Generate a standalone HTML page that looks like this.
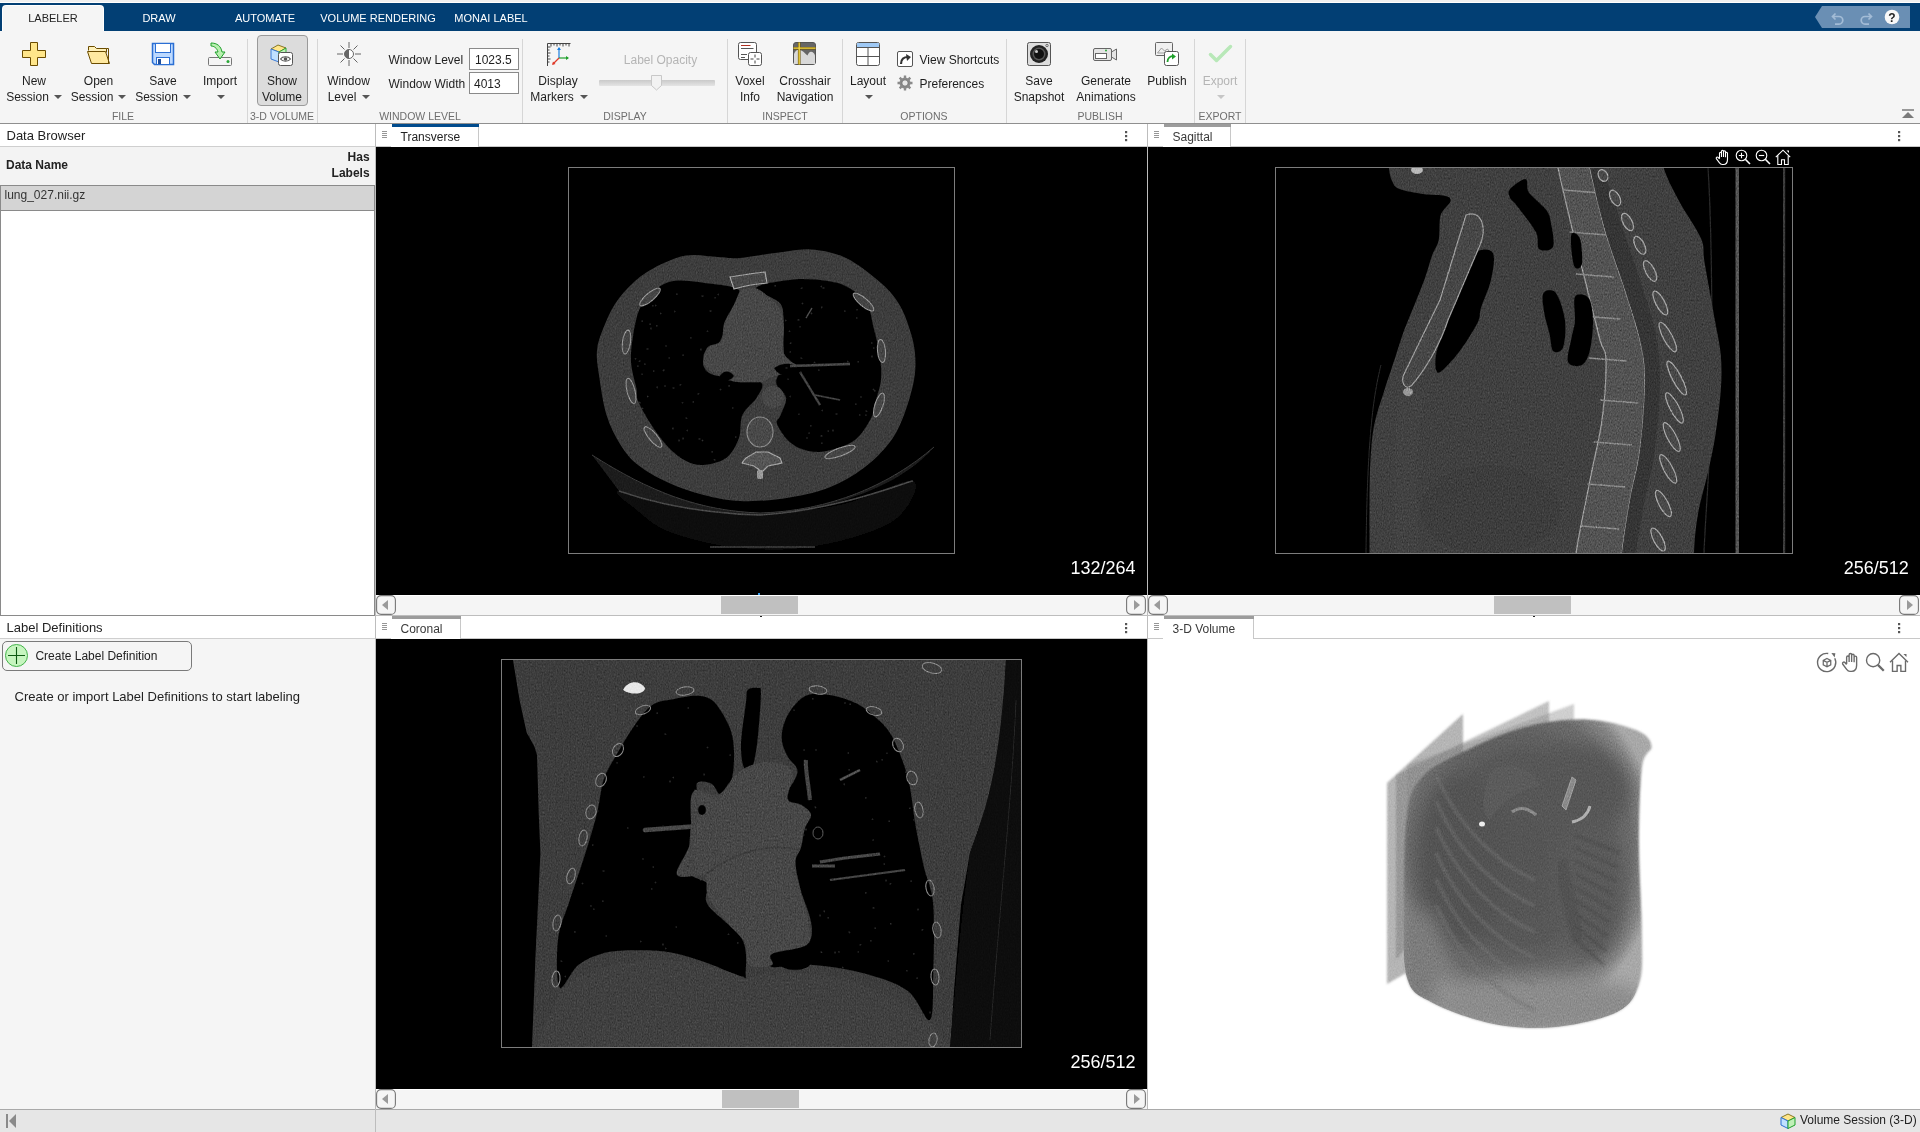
<!DOCTYPE html>
<html><head><meta charset="utf-8"><title>Medical Image Labeler</title>
<style>
*{margin:0;padding:0;box-sizing:border-box}
html,body{width:1920px;height:1132px;overflow:hidden;background:#f5f5f5;font-family:"Liberation Sans",sans-serif;position:relative}
.a{position:absolute}
.t{position:absolute;line-height:1;white-space:nowrap}
svg{position:absolute;overflow:visible}
</style></head><body>
<div class="a" style="left:0px;top:0px;width:1920px;height:2px;background:#f0f0f0;"></div>
<div class="a" style="left:0px;top:2px;width:1920px;height:1px;background:#ffffff;"></div>
<div class="a" style="left:0px;top:3px;width:1920px;height:28px;background:#023f74;"></div>
<div class="a" style="left:3px;top:6px;width:100px;height:25px;background:#f5f5f5;border-radius:3px 3px 0 0;box-shadow:0 0 0 1px #ffffff;"></div>
<div class="t" style="top:13.19px;font-size:11px;color:#222;left:-97px;width:300px;text-align:center;">LABELER</div>
<div class="t" style="top:13.19px;font-size:11px;color:#ffffff;left:9px;width:300px;text-align:center;">DRAW</div>
<div class="t" style="top:13.19px;font-size:11px;color:#ffffff;left:115px;width:300px;text-align:center;">AUTOMATE</div>
<div class="t" style="top:13.19px;font-size:11px;color:#ffffff;left:228px;width:300px;text-align:center;">VOLUME RENDERING</div>
<div class="t" style="top:13.19px;font-size:11px;color:#ffffff;left:341px;width:300px;text-align:center;">MONAI LABEL</div>
<svg style="left:1815px;top:6px;" width="95" height="22" viewBox="0 0 95 22"><path d="M7 0H95V22H7L0 11Z" fill="#6a8fb4"/><path d="M20.5 7.5l-3 3 3 3M17.5 10.5h6.5a3.8 3.8 0 0 1 0 7.6h-4" fill="none" stroke="#a3bcd6" stroke-width="1.7"/><path d="M53.5 7.5l3 3-3 3M56.5 10.5h-6.5a3.8 3.8 0 0 0 0 7.6h4" fill="none" stroke="#a3bcd6" stroke-width="1.7"/><circle cx="77" cy="11" r="7.3" fill="#f8f8f8"/><text x="77" y="15.5" font-family="Liberation Sans" font-weight="bold" font-size="12" text-anchor="middle" fill="#222">?</text></svg>
<div class="a" style="left:0px;top:31px;width:1920px;height:92px;background:#f5f5f5;"></div>
<div class="a" style="left:0px;top:123px;width:1920px;height:1px;background:#8f8f8f;"></div>
<div class="a" style="left:247px;top:39px;width:1px;height:84px;background:#d6d6d6;"></div>
<div class="a" style="left:317px;top:39px;width:1px;height:84px;background:#d6d6d6;"></div>
<div class="a" style="left:522px;top:39px;width:1px;height:84px;background:#d6d6d6;"></div>
<div class="a" style="left:727px;top:39px;width:1px;height:84px;background:#d6d6d6;"></div>
<div class="a" style="left:842px;top:39px;width:1px;height:84px;background:#d6d6d6;"></div>
<div class="a" style="left:1006px;top:39px;width:1px;height:84px;background:#d6d6d6;"></div>
<div class="a" style="left:1194px;top:39px;width:1px;height:84px;background:#d6d6d6;"></div>
<div class="a" style="left:1245px;top:39px;width:1px;height:84px;background:#d6d6d6;"></div>
<div class="t" style="top:111.11px;font-size:10.5px;color:#6e6e6e;left:-27px;width:300px;text-align:center;">FILE</div>
<div class="t" style="top:111.11px;font-size:10.5px;color:#6e6e6e;left:132px;width:300px;text-align:center;">3-D VOLUME</div>
<div class="t" style="top:111.11px;font-size:10.5px;color:#6e6e6e;left:270px;width:300px;text-align:center;">WINDOW LEVEL</div>
<div class="t" style="top:111.11px;font-size:10.5px;color:#6e6e6e;left:475px;width:300px;text-align:center;">DISPLAY</div>
<div class="t" style="top:111.11px;font-size:10.5px;color:#6e6e6e;left:635px;width:300px;text-align:center;">INSPECT</div>
<div class="t" style="top:111.11px;font-size:10.5px;color:#6e6e6e;left:774px;width:300px;text-align:center;">OPTIONS</div>
<div class="t" style="top:111.11px;font-size:10.5px;color:#6e6e6e;left:950px;width:300px;text-align:center;">PUBLISH</div>
<div class="t" style="top:111.11px;font-size:10.5px;color:#6e6e6e;left:1070px;width:300px;text-align:center;">EXPORT</div>
<div class="t" style="top:74.84px;font-size:12px;color:#1e1e1e;left:-116px;width:300px;text-align:center;">New</div>
<div class="t" style="top:90.84px;font-size:12px;color:#1e1e1e;left:-122.5px;width:300px;text-align:center;">Session</div>
<svg style="left:54px;top:95px;" width="8" height="4" viewBox="0 0 8 4"><path d="M0 0H8L4 4Z" fill="#555"/></svg>
<div class="t" style="top:74.84px;font-size:12px;color:#1e1e1e;left:-51.5px;width:300px;text-align:center;">Open</div>
<div class="t" style="top:90.84px;font-size:12px;color:#1e1e1e;left:-58px;width:300px;text-align:center;">Session</div>
<svg style="left:118px;top:95px;" width="8" height="4" viewBox="0 0 8 4"><path d="M0 0H8L4 4Z" fill="#555"/></svg>
<div class="t" style="top:74.84px;font-size:12px;color:#1e1e1e;left:13px;width:300px;text-align:center;">Save</div>
<div class="t" style="top:90.84px;font-size:12px;color:#1e1e1e;left:6.5px;width:300px;text-align:center;">Session</div>
<svg style="left:183px;top:95px;" width="8" height="4" viewBox="0 0 8 4"><path d="M0 0H8L4 4Z" fill="#555"/></svg>
<div class="t" style="top:74.84px;font-size:12px;color:#1e1e1e;left:70px;width:300px;text-align:center;">Import</div>
<svg style="left:217px;top:95px;" width="8" height="4" viewBox="0 0 8 4"><path d="M0 0H8L4 4Z" fill="#555"/></svg>
<svg style="left:22px;top:42px;" width="24" height="24" viewBox="0 0 24 24"><path d="M8.5 0.5h7v8h8v7h-8v8h-7v-8h-8v-7h8z" fill="#ffe68a" stroke="#6b4c00" stroke-width="1" stroke-linejoin="round"/></svg>
<svg style="left:87px;top:45px;" width="24" height="19" viewBox="0 0 24 19"><path d="M1.5 5.5V1.5h6l2 2h10v4" fill="#fff1b8" stroke="#6b4c00"/><path d="M0.5 6.5h18l4 12h-18z" fill="#ffe9a0" stroke="#6b4c00" stroke-linejoin="round"/><path d="M19.5 3.5h2v15" fill="none" stroke="#6b4c00"/></svg>
<svg style="left:151px;top:42px;" width="24" height="24" viewBox="0 0 24 24"><path d="M1.5 1.5h21v21h-19l-2-2z" fill="#bcd9ff" stroke="#2b6fd4" stroke-width="1.5"/><rect x="4.5" y="1.5" width="15" height="9" fill="#fff" stroke="#2b6fd4"/><rect x="5.5" y="15.5" width="13" height="7" fill="#fff" stroke="#2b6fd4"/><rect x="7" y="17" width="3" height="5" fill="#1f4f9c"/></svg>
<svg style="left:208px;top:42px;" width="24" height="24" viewBox="0 0 24 24"><rect x="0.5" y="15.5" width="23" height="8" rx="1" fill="#f5f5f5" stroke="#777"/><path d="M3 1c6 0 10 3 11 9h3l-5 7-5-7h3c-1-4-4-6-7-6z" fill="#b8f0b0" stroke="#1fa02a" stroke-linejoin="round"/><circle cx="20" cy="19.5" r="1.5" fill="#2aa838"/></svg>
<div class="a" style="left:257px;top:35px;width:51px;height:71px;background:#dcdcdc;border:1px solid #9a9a9a;border-radius:4px;"></div>
<div class="t" style="top:74.84px;font-size:12px;color:#1e1e1e;left:132px;width:300px;text-align:center;">Show</div>
<div class="t" style="top:90.84px;font-size:12px;color:#1e1e1e;left:132px;width:300px;text-align:center;">Volume</div>
<svg style="left:269px;top:42px;" width="26" height="24" viewBox="0 0 26 24"><path d="M2 7l7-4 8 3v0l-7 4z" fill="#ffe68a" stroke="#6b5a00" stroke-width="0.8"/><path d="M2 7l8 3v10l-8-3z" fill="#bfe0ff" stroke="#2b6fd4" stroke-width="0.9"/><path d="M10 10l7-4v9l-7 5z" fill="#c0f0b8" stroke="#1fa02a" stroke-width="0.9"/><rect x="9.5" y="10.5" width="14" height="13" rx="2" fill="#fff" stroke="#555"/><path d="M11.5 17c2-3 8-3 10 0c-2 3-8 3-10 0z" fill="none" stroke="#555" stroke-width="1.1"/><circle cx="16.5" cy="17" r="1.8" fill="#555"/></svg>
<div class="t" style="top:74.84px;font-size:12px;color:#1e1e1e;left:198.5px;width:300px;text-align:center;">Window</div>
<div class="t" style="top:90.84px;font-size:12px;color:#1e1e1e;left:192px;width:300px;text-align:center;">Level</div>
<svg style="left:362px;top:95px;" width="8" height="4" viewBox="0 0 8 4"><path d="M0 0H8L4 4Z" fill="#555"/></svg>
<svg style="left:337px;top:42px;" width="24" height="24" viewBox="0 0 24 24"><g stroke="#666" stroke-width="1"><path d="M12 0v6M12 18v6M0 12h6M18 12h6M3.5 3.5l4 4M16.5 16.5l4 4M3.5 20.5l4-4M16.5 7.5l4-4"/></g><circle cx="12" cy="12" r="4.5" fill="#fff" stroke="#666"/><path d="M12 7.5a4.5 4.5 0 0 0 0 9z" fill="#666"/></svg>
<div class="t" style="top:53.84px;font-size:12px;color:#1e1e1e;left:388.5px;">Window Level</div>
<div class="t" style="top:77.84px;font-size:12px;color:#1e1e1e;left:388.5px;">Window Width</div>
<div class="a" style="left:469px;top:48px;width:50px;height:22px;background:#fff;border:1px solid #8a8a8a;"></div>
<div class="a" style="left:469px;top:72px;width:50px;height:22px;background:#fff;border:1px solid #8a8a8a;"></div>
<div class="t" style="top:53.84px;font-size:12px;color:#1e1e1e;left:475px;">1023.5</div>
<div class="t" style="top:77.84px;font-size:12px;color:#1e1e1e;left:474px;">4013</div>
<div class="t" style="top:74.84px;font-size:12px;color:#1e1e1e;left:408px;width:300px;text-align:center;">Display</div>
<div class="t" style="top:90.84px;font-size:12px;color:#1e1e1e;left:402px;width:300px;text-align:center;">Markers</div>
<svg style="left:580px;top:95px;" width="8" height="4" viewBox="0 0 8 4"><path d="M0 0H8L4 4Z" fill="#555"/></svg>
<svg style="left:546px;top:42px;" width="25" height="24" viewBox="0 0 25 24"><g stroke="#444" stroke-width="1" fill="none"><path d="M1.5 24V1.5H24.5"/><path d="M5 1.5v3M8 1.5v2M11 1.5v3M14 1.5v2M17 1.5v3M20 1.5v2M23 1.5v3M1.5 5h3M1.5 8h2M1.5 11h3M1.5 14h2M1.5 17h3M1.5 20h2"/></g><path d="M13 16V6" stroke="#1a7fe0" stroke-width="1.2"/><path d="M13 5l-2 3h4z" fill="#1a7fe0"/><path d="M13 16h9" stroke="#1fa02a" stroke-width="1.2"/><path d="M23 16l-3-2v4z" fill="#1fa02a"/><path d="M13 16l-6 6" stroke="#e03a2a" stroke-width="1.2"/><path d="M6 23l1-3.5 2.5 2.5z" fill="#e03a2a"/></svg>
<div class="t" style="top:53.84px;font-size:12px;color:#b5b5b5;left:510.5px;width:300px;text-align:center;">Label Opacity</div>
<div class="a" style="left:599px;top:80px;width:116px;height:6px;background:linear-gradient(#c9c9c9,#e4e4e4);border-radius:1px;"></div>
<svg style="left:650px;top:74px;" width="13" height="17" viewBox="0 0 13 17"><path d="M1.5 1.5h10v10l-5 4.5-5-4.5z" fill="#f2f2f2" stroke="#c8c8c8"/></svg>
<div class="t" style="top:74.84px;font-size:12px;color:#1e1e1e;left:600px;width:300px;text-align:center;">Voxel</div>
<div class="t" style="top:90.84px;font-size:12px;color:#1e1e1e;left:600px;width:300px;text-align:center;">Info</div>
<div class="t" style="top:74.84px;font-size:12px;color:#1e1e1e;left:655px;width:300px;text-align:center;">Crosshair</div>
<div class="t" style="top:90.84px;font-size:12px;color:#1e1e1e;left:655px;width:300px;text-align:center;">Navigation</div>
<svg style="left:738px;top:42px;" width="25" height="24" viewBox="0 0 25 24"><rect x="0.5" y="0.5" width="18" height="17" rx="2" fill="#fff" stroke="#555"/><path d="M3 3.5h9.5" stroke="#b03020" stroke-width="1"/><path d="M3 6.5h12.5M3 12.5h6M3 15.5h4" stroke="#555" stroke-width="1"/><rect x="10.5" y="10.5" width="13" height="13" rx="2" fill="#fff" stroke="#555"/><path d="M17 12.5v3M17 18.5v3M12.5 17h3M18.5 17h3" stroke="#444"/></svg>
<svg style="left:793px;top:42px;" width="23" height="23" viewBox="0 0 23 23"><rect x="0.5" y="0.5" width="22" height="22" rx="2.5" fill="#666" stroke="#555"/><path d="M1 22V12C2 9 4 7.5 6.2 7.7C9 8 12 11 14.4 13.5C15.5 11 16.5 9.7 18 9.7C20 9.7 21.5 11.5 22 13.5V22Z" fill="#d9d9d9"/><path d="M6.2 0.5V22.5M0.5 6.2H22.5" stroke="#6b5200" stroke-width="2.6"/><path d="M6.2 0.5V22.5M0.5 6.2H22.5" stroke="#f5d94a" stroke-width="1.3"/></svg>
<div class="t" style="top:74.84px;font-size:12px;color:#1e1e1e;left:718px;width:300px;text-align:center;">Layout</div>
<svg style="left:865px;top:95px;" width="8" height="4" viewBox="0 0 8 4"><path d="M0 0H8L4 4Z" fill="#555"/></svg>
<svg style="left:856px;top:42px;" width="25" height="25" viewBox="0 0 25 25"><rect x="0.5" y="0.5" width="23" height="23" rx="2" fill="#fff" stroke="#555"/><path d="M1 1h22v4H1z" fill="#9fc9f5"/><path d="M0.5 5.5h23M12 5.5v18M0.5 14.5h23" stroke="#555"/></svg>
<svg style="left:897px;top:51px;" width="17" height="17" viewBox="0 0 17 17"><rect x="0.5" y="0.5" width="15" height="15" rx="1.5" fill="#fff" stroke="#555"/><path d="M4 13c0-5 3-7 7-7" fill="none" stroke="#333" stroke-width="2.2"/><path d="M9 3l5 3-4 4z" fill="#333"/></svg>
<div class="t" style="top:53.84px;font-size:12px;color:#1e1e1e;left:919.5px;">View Shortcuts</div>
<svg style="left:897px;top:75px;" width="16" height="16" viewBox="0 0 16 16"><g fill="#8a8a8a"><circle cx="8" cy="8" r="5.5"/><g stroke="#8a8a8a" stroke-width="2.4"><path d="M8 0.5v3M8 12.5v3M0.5 8h3M12.5 8h3M2.7 2.7l2.1 2.1M11.2 11.2l2.1 2.1M2.7 13.3l2.1-2.1M11.2 4.8l2.1-2.1"/></g></g><circle cx="8" cy="8" r="3.2" fill="#e8e8e8" stroke="#666" stroke-width="0.8"/></svg>
<div class="t" style="top:77.84px;font-size:12px;color:#1e1e1e;left:919.5px;">Preferences</div>
<div class="t" style="top:74.84px;font-size:12px;color:#1e1e1e;left:889px;width:300px;text-align:center;">Save</div>
<div class="t" style="top:90.84px;font-size:12px;color:#1e1e1e;left:889px;width:300px;text-align:center;">Snapshot</div>
<div class="t" style="top:74.84px;font-size:12px;color:#1e1e1e;left:956px;width:300px;text-align:center;">Generate</div>
<div class="t" style="top:90.84px;font-size:12px;color:#1e1e1e;left:956px;width:300px;text-align:center;">Animations</div>
<div class="t" style="top:74.84px;font-size:12px;color:#1e1e1e;left:1017px;width:300px;text-align:center;">Publish</div>
<svg style="left:1027px;top:42px;" width="24" height="24" viewBox="0 0 24 24"><rect x="0.5" y="0.5" width="23" height="23" rx="2" fill="#ddd" stroke="#555"/><circle cx="12" cy="12" r="9" fill="#222"/><circle cx="12" cy="12" r="6.5" fill="#555"/><circle cx="12" cy="12" r="5" fill="#111"/><circle cx="9.5" cy="9.5" r="1.5" fill="#ccc"/><circle cx="20" cy="3.5" r="1.2" fill="none" stroke="#555" stroke-width="0.8"/></svg>
<svg style="left:1093px;top:46px;" width="25" height="16" viewBox="0 0 25 16"><rect x="0.5" y="2.5" width="18" height="12" rx="1.5" fill="#e5e5e5" stroke="#666"/><rect x="2.5" y="7.5" width="11" height="5" fill="#fff" stroke="#666"/><circle cx="13" cy="4.5" r="1" fill="#2aa838"/><path d="M18.5 6l5-3v11l-5-3z" fill="#e5e5e5" stroke="#666"/></svg>
<svg style="left:1155px;top:42px;" width="25" height="25" viewBox="0 0 25 25"><rect x="0.5" y="0.5" width="17" height="13" rx="1" fill="#f0f0f0" stroke="#666"/><path d="M2.5 11l4-5 3 3 3-2 3 4z" fill="none" stroke="#888" stroke-width="0.8"/><rect x="9.5" y="9.5" width="14" height="14" rx="2" fill="#fff" stroke="#555"/><path d="M12.5 20c0-4 3-6 6-6" fill="none" stroke="#1fa02a" stroke-width="1.8"/><path d="M17 11.5l4 3-4 3z" fill="#1fa02a"/></svg>
<div class="t" style="top:74.84px;font-size:12px;color:#b5b5b5;left:1070px;width:300px;text-align:center;">Export</div>
<svg style="left:1217px;top:95px;" width="8" height="4" viewBox="0 0 8 4"><path d="M0 0H8L4 4Z" fill="#c6c6c6"/></svg>
<svg style="left:1209px;top:45px;" width="23" height="18" viewBox="0 0 23 18"><path d="M1.5 9.5l6 6 14-14" fill="none" stroke="#b8e8b8" stroke-width="3.5" stroke-linecap="round" stroke-linejoin="round"/></svg>
<svg style="left:1901px;top:109px;" width="14" height="10" viewBox="0 0 14 10"><path d="M1 1h12" stroke="#7a7a7a" stroke-width="1.5"/><path d="M7 3l6 6H1z" fill="#7a7a7a"/></svg>
<div class="a" style="left:0px;top:124px;width:375px;height:985px;background:#f5f5f5;"></div>
<div class="a" style="left:0px;top:124px;width:375px;height:22px;background:#ffffff;"></div>
<div class="a" style="left:0px;top:146px;width:375px;height:1px;background:#cfcfcf;"></div>
<div class="t" style="top:128.60px;font-size:13px;color:#222;left:6.5px;">Data Browser</div>
<div class="a" style="left:0px;top:147px;width:375px;height:38px;background:#f3f3f3;"></div>
<div class="a" style="left:0px;top:185px;width:375px;height:431px;background:#ffffff;border:1px solid #8a8a8a;border-top:none;"></div>
<div class="t" style="top:159.44px;font-size:12px;color:#222;font-weight:bold;left:6px;">Data Name</div>
<div class="t" style="top:151.44px;font-size:12px;color:#222;font-weight:bold;left:-30.399999999999977px;width:400px;text-align:right;">Has</div>
<div class="t" style="top:166.54px;font-size:12px;color:#222;font-weight:bold;left:-30.399999999999977px;width:400px;text-align:right;">Labels</div>
<div class="a" style="left:1px;top:185px;width:373px;height:26px;background:#d4d4d4;border-top:1px solid #8a8a8a;border-bottom:1px solid #8a8a8a;"></div>
<div class="t" style="top:189.34px;font-size:12px;color:#333;left:4.5px;">lung_027.nii.gz</div>
<div class="a" style="left:0px;top:616px;width:375px;height:22px;background:#ffffff;"></div>
<div class="a" style="left:0px;top:638px;width:375px;height:1px;background:#cfcfcf;"></div>
<div class="t" style="top:620.80px;font-size:13px;color:#222;left:6.5px;">Label Definitions</div>
<div class="a" style="left:2px;top:641px;width:190px;height:30px;background:#f5f5f5;border:1px solid #7a7a7a;border-radius:5px;"></div>
<svg style="left:5px;top:644px;" width="23" height="23" viewBox="0 0 23 23"><circle cx="11.5" cy="11.5" r="11" fill="#c6f5bf" stroke="#43b34a" stroke-width="1"/><path d="M11.5 3v17M3 11.5h17" stroke="#0d5a12" stroke-width="1.1"/></svg>
<div class="t" style="top:649.74px;font-size:12px;color:#222;left:35.4px;">Create Label Definition</div>
<div class="t" style="top:689.50px;font-size:13px;color:#222;left:14.6px;">Create or import Label Definitions to start labeling</div>
<div class="a" style="left:375px;top:124px;width:1px;height:1008px;background:#bdbdbd;"></div>
<div class="a" style="left:1147px;top:124px;width:1px;height:985px;background:#bdbdbd;"></div>
<div class="a" style="left:376px;top:124px;width:771px;height:23px;background:#ffffff;"></div>
<div class="a" style="left:376px;top:146px;width:771px;height:1px;background:#c8c8c8;"></div>
<div class="a" style="left:391px;top:124px;width:1px;height:23px;background:#c8c8c8;"></div>
<svg style="left:382px;top:131px;" width="5" height="8" viewBox="0 0 5 8"><path d="M0 0.5h5M0 2.5h5M0 4.5h5M0 6.5h5" stroke="#8a8a8a" stroke-width="0.9"/></svg>
<div class="a" style="left:391px;top:124px;width:88px;height:23px;background:#ffffff;border-right:1px solid #c8c8c8;"></div>
<div class="a" style="left:392px;top:124px;width:87px;height:3px;background:#004b8d;"></div>
<div class="t" style="top:130.64px;font-size:12px;color:#222;left:400.5px;">Transverse</div>
<svg style="left:1124.5px;top:130.5px;" width="3" height="11" viewBox="0 0 3 11"><rect x="0" y="0" width="2.2" height="2.2" fill="#555"/><rect x="0" y="4" width="2.2" height="2.2" fill="#555"/><rect x="0" y="8" width="2.2" height="2.2" fill="#555"/></svg>
<div class="a" style="left:376px;top:147px;width:771px;height:448px;background:#000000;"></div>
<div class="a" style="left:376px;top:595px;width:771px;height:20px;background:#f5f5f5;border-top:1px solid #ffffff;"></div>
<div class="a" style="left:376px;top:615px;width:771px;height:1px;background:#bdbdbd;"></div>
<svg style="left:376px;top:595px;" width="20" height="20" viewBox="0 0 20 20"><rect x="0.6" y="0.6" width="18.8" height="18.8" rx="4.5" fill="#f5f5f5" stroke="#777" stroke-width="1.1"/><path d="M12 5v10l-6-5z" fill="#9a9a9a"/></svg>
<svg style="left:1126px;top:595px;" width="20" height="20" viewBox="0 0 20 20"><rect x="0.6" y="0.6" width="18.8" height="18.8" rx="4.5" fill="#f5f5f5" stroke="#777" stroke-width="1.1"/><path d="M8 5v10l6-5z" fill="#9a9a9a"/></svg>
<div class="a" style="left:721px;top:596px;width:77px;height:18px;background:#c0c0c0;"></div>
<div class="a" style="left:1148px;top:124px;width:772px;height:23px;background:#ffffff;"></div>
<div class="a" style="left:1148px;top:146px;width:772px;height:1px;background:#c8c8c8;"></div>
<div class="a" style="left:1163px;top:124px;width:1px;height:23px;background:#c8c8c8;"></div>
<svg style="left:1154px;top:131px;" width="5" height="8" viewBox="0 0 5 8"><path d="M0 0.5h5M0 2.5h5M0 4.5h5M0 6.5h5" stroke="#8a8a8a" stroke-width="0.9"/></svg>
<div class="a" style="left:1163px;top:124px;width:68px;height:23px;background:#ffffff;border-right:1px solid #c8c8c8;"></div>
<div class="a" style="left:1164px;top:124px;width:67px;height:3px;background:#9c9c9c;"></div>
<div class="t" style="top:130.64px;font-size:12px;color:#3a3a3a;left:1172.5px;">Sagittal</div>
<svg style="left:1897.5px;top:130.5px;" width="3" height="11" viewBox="0 0 3 11"><rect x="0" y="0" width="2.2" height="2.2" fill="#555"/><rect x="0" y="4" width="2.2" height="2.2" fill="#555"/><rect x="0" y="8" width="2.2" height="2.2" fill="#555"/></svg>
<div class="a" style="left:1148px;top:147px;width:772px;height:448px;background:#000000;"></div>
<div class="a" style="left:1148px;top:595px;width:772px;height:20px;background:#f5f5f5;border-top:1px solid #ffffff;"></div>
<div class="a" style="left:1148px;top:615px;width:772px;height:1px;background:#bdbdbd;"></div>
<svg style="left:1148px;top:595px;" width="20" height="20" viewBox="0 0 20 20"><rect x="0.6" y="0.6" width="18.8" height="18.8" rx="4.5" fill="#f5f5f5" stroke="#777" stroke-width="1.1"/><path d="M12 5v10l-6-5z" fill="#9a9a9a"/></svg>
<svg style="left:1899px;top:595px;" width="20" height="20" viewBox="0 0 20 20"><rect x="0.6" y="0.6" width="18.8" height="18.8" rx="4.5" fill="#f5f5f5" stroke="#777" stroke-width="1.1"/><path d="M8 5v10l6-5z" fill="#9a9a9a"/></svg>
<div class="a" style="left:1494px;top:596px;width:77px;height:18px;background:#c0c0c0;"></div>
<div class="a" style="left:376px;top:616px;width:771px;height:23px;background:#ffffff;"></div>
<div class="a" style="left:376px;top:638px;width:771px;height:1px;background:#c8c8c8;"></div>
<div class="a" style="left:391px;top:616px;width:1px;height:23px;background:#c8c8c8;"></div>
<svg style="left:382px;top:623px;" width="5" height="8" viewBox="0 0 5 8"><path d="M0 0.5h5M0 2.5h5M0 4.5h5M0 6.5h5" stroke="#8a8a8a" stroke-width="0.9"/></svg>
<div class="a" style="left:391px;top:616px;width:70px;height:23px;background:#ffffff;border-right:1px solid #c8c8c8;"></div>
<div class="a" style="left:392px;top:616px;width:69px;height:3px;background:#9c9c9c;"></div>
<div class="t" style="top:622.64px;font-size:12px;color:#3a3a3a;left:400.5px;">Coronal</div>
<svg style="left:1124.5px;top:622.5px;" width="3" height="11" viewBox="0 0 3 11"><rect x="0" y="0" width="2.2" height="2.2" fill="#555"/><rect x="0" y="4" width="2.2" height="2.2" fill="#555"/><rect x="0" y="8" width="2.2" height="2.2" fill="#555"/></svg>
<div class="a" style="left:376px;top:639px;width:771px;height:450px;background:#000000;"></div>
<div class="a" style="left:376px;top:1089px;width:771px;height:20px;background:#f5f5f5;border-top:1px solid #ffffff;"></div>
<div class="a" style="left:376px;top:1109px;width:771px;height:1px;background:#bdbdbd;"></div>
<svg style="left:376px;top:1089px;" width="20" height="20" viewBox="0 0 20 20"><rect x="0.6" y="0.6" width="18.8" height="18.8" rx="4.5" fill="#f5f5f5" stroke="#777" stroke-width="1.1"/><path d="M12 5v10l-6-5z" fill="#9a9a9a"/></svg>
<svg style="left:1126px;top:1089px;" width="20" height="20" viewBox="0 0 20 20"><rect x="0.6" y="0.6" width="18.8" height="18.8" rx="4.5" fill="#f5f5f5" stroke="#777" stroke-width="1.1"/><path d="M8 5v10l6-5z" fill="#9a9a9a"/></svg>
<div class="a" style="left:722px;top:1090px;width:77px;height:18px;background:#c0c0c0;"></div>
<div class="a" style="left:1148px;top:616px;width:772px;height:23px;background:#ffffff;"></div>
<div class="a" style="left:1148px;top:638px;width:772px;height:1px;background:#c8c8c8;"></div>
<div class="a" style="left:1163px;top:616px;width:1px;height:23px;background:#c8c8c8;"></div>
<svg style="left:1154px;top:623px;" width="5" height="8" viewBox="0 0 5 8"><path d="M0 0.5h5M0 2.5h5M0 4.5h5M0 6.5h5" stroke="#8a8a8a" stroke-width="0.9"/></svg>
<div class="a" style="left:1163px;top:616px;width:91px;height:23px;background:#ffffff;border-right:1px solid #c8c8c8;"></div>
<div class="a" style="left:1164px;top:616px;width:90px;height:3px;background:#9c9c9c;"></div>
<div class="t" style="top:622.64px;font-size:12px;color:#3a3a3a;left:1172.5px;">3-D Volume</div>
<svg style="left:1897.5px;top:622.5px;" width="3" height="11" viewBox="0 0 3 11"><rect x="0" y="0" width="2.2" height="2.2" fill="#555"/><rect x="0" y="4" width="2.2" height="2.2" fill="#555"/><rect x="0" y="8" width="2.2" height="2.2" fill="#555"/></svg>
<div class="a" style="left:1148px;top:639px;width:772px;height:470px;background:#ffffff;"></div>
<svg style="left:376px;top:147px" width="771" height="448" viewBox="376 147 771 448"><defs><filter id="tb" x="-5%" y="-5%" width="110%" height="110%"><feGaussianBlur stdDeviation="0.7"/></filter><filter id="tn" x="0" y="0" width="100%" height="100%"><feTurbulence type="fractalNoise" baseFrequency="0.9" numOctaves="1" seed="3"/><feColorMatrix values="0 0 0 0 0.5 0 0 0 0 0.5 0 0 0 0 0.5 0 0 0 0.18 0"/><feComposite in2="SourceGraphic" operator="in"/></filter></defs>
<g filter="url(#tb)">
<path d="M619.0 491.0 C626.8 491.0 656.5 503.3 680.0 507.0 C703.5 510.7 733.3 513.3 760.0 513.0 C786.7 512.7 814.5 510.3 840.0 505.0 C865.5 499.7 904.2 478.3 913.0 481.0 C921.8 483.7 909.2 510.2 893.0 521.0 C876.8 531.8 841.5 541.5 816.0 546.0 C790.5 550.5 764.3 550.3 740.0 548.0 C715.7 545.7 687.8 538.8 670.0 532.0 C652.2 525.2 641.5 513.8 633.0 507.0 C624.5 500.2 611.2 491.0 619.0 491.0Z" fill="#0e0e0e"/>
<path d="M592 455 C650 492 700 511 760 513 C830 511 890 485 934 447 C905 482 840 510 760 515 C690 513 645 500 619 491Z" fill="#1c1c1c"/>
<path d="M592 455 C650 492 700 511 760 513 C830 511 890 485 934 447" fill="none" stroke="#3a3a3a" stroke-width="1"/>
<path d="M619 491 C645 500 690 513 760 515 C840 510 905 482 913 481" fill="none" stroke="#4a4a4a" stroke-width="1.6"/>
<path d="M710 547 L815 547" stroke="#333" stroke-width="1.8"/>
<path d="M740.0 258.0 C749.5 257.3 763.2 254.4 775.0 253.0 C786.8 251.6 798.9 248.6 810.7 249.4 C822.5 250.2 834.3 252.4 846.0 258.0 C857.7 263.6 872.2 275.3 881.0 283.0 C889.8 290.7 894.2 296.3 899.0 304.0 C903.8 311.7 906.9 320.7 909.6 329.0 C912.3 337.3 914.3 345.2 915.0 353.7 C915.7 362.2 915.8 369.8 914.0 380.0 C912.2 390.2 908.0 404.7 904.0 415.0 C900.0 425.3 896.7 433.2 890.0 442.0 C883.3 450.8 874.0 460.3 863.7 468.0 C853.4 475.7 841.3 482.9 828.0 488.0 C814.7 493.1 798.7 496.2 784.0 498.4 C769.3 500.6 753.4 501.6 740.0 501.0 C726.6 500.4 715.7 498.1 703.7 495.0 C691.7 491.9 679.0 487.5 668.0 482.5 C657.0 477.5 645.9 471.2 638.0 465.0 C630.1 458.8 625.9 453.3 620.6 445.0 C615.4 436.7 610.1 426.7 606.5 415.0 C602.9 403.3 600.6 385.8 599.0 375.0 C597.4 364.2 596.3 357.7 597.0 350.0 C597.7 342.3 600.0 336.7 603.0 329.0 C606.0 321.3 610.0 311.7 615.0 304.0 C620.0 296.3 626.5 289.0 633.0 283.0 C639.5 277.0 645.2 272.6 654.0 268.0 C662.8 263.4 675.3 257.4 686.0 255.6 C696.7 253.8 709.0 256.6 718.0 257.0 C727.0 257.4 730.5 258.7 740.0 258.0Z" fill="#3e3e3e"/>
<path d="M673.6 281.0 C681.9 279.8 694.1 281.5 705.0 283.0 C715.9 284.5 734.5 285.6 739.0 290.0 C743.5 294.4 735.0 301.2 732.0 309.5 C729.0 317.8 724.0 333.2 721.0 339.5 C718.0 345.8 716.7 345.4 714.0 347.5 C711.3 349.6 706.7 348.9 705.0 352.0 C703.3 355.1 702.2 362.2 703.7 366.0 C705.2 369.8 707.1 372.8 714.0 375.0 C720.9 377.2 737.0 377.6 745.0 379.0 C753.0 380.4 760.0 380.4 762.0 383.5 C764.0 386.6 760.0 392.4 756.7 397.7 C753.5 402.9 745.5 408.3 742.5 415.0 C739.5 421.7 741.6 430.9 739.0 438.0 C736.4 445.1 732.5 453.2 726.6 457.7 C720.7 462.2 710.5 464.4 703.7 465.0 C696.9 465.6 692.0 464.0 686.0 461.0 C680.0 458.0 673.9 453.2 668.0 447.0 C662.1 440.8 655.7 431.7 650.7 424.0 C645.7 416.3 640.4 406.8 638.0 401.0 C635.6 395.2 637.7 395.4 636.5 389.0 C635.3 382.6 631.6 371.3 631.0 362.5 C630.4 353.7 631.5 345.1 633.0 336.0 C634.5 326.9 636.3 315.7 640.0 308.0 C643.7 300.3 649.4 294.5 655.0 290.0 C660.6 285.5 665.3 282.2 673.6 281.0Z" fill="#060606"/>
<path d="M756.0 288.0 C758.1 283.9 781.0 280.7 793.0 279.5 C805.0 278.3 818.6 279.6 828.0 281.0 C837.4 282.4 843.0 284.2 849.5 288.0 C856.0 291.8 862.9 297.2 867.0 304.0 C871.1 310.8 871.9 320.7 874.0 329.0 C876.1 337.3 878.4 345.2 879.6 353.7 C880.8 362.2 881.9 371.2 881.0 380.0 C880.1 388.8 875.7 400.2 874.0 406.7 C872.3 413.2 873.9 413.4 870.7 419.0 C867.5 424.6 862.1 434.7 855.0 440.0 C847.9 445.3 836.0 448.9 828.0 450.7 C820.0 452.5 813.4 452.1 807.0 450.7 C800.6 449.2 794.5 446.4 789.5 442.0 C784.5 437.6 778.5 428.5 777.0 424.0 C775.5 419.5 779.1 419.4 780.6 415.0 C782.1 410.6 786.8 403.2 786.0 397.7 C785.2 392.2 776.0 387.9 776.0 382.0 C776.0 376.1 784.7 366.7 786.0 362.0 C787.3 357.3 784.5 359.2 784.0 353.7 C783.5 348.2 783.6 337.3 783.0 329.0 C782.4 320.7 785.1 310.8 780.6 304.0 C776.1 297.2 753.9 292.1 756.0 288.0Z" fill="#060606"/>
<path d="M741.7 289.5 C744.6 288.7 751.4 286.5 756.6 288.4 C761.8 290.3 768.5 296.8 772.7 301.0 C776.9 305.2 780.1 309.2 782.0 313.6 C783.9 318.0 783.8 321.3 784.0 327.4 C784.2 333.5 782.0 344.8 783.0 350.4 C784.0 355.9 787.7 358.1 790.0 360.7 C792.3 363.3 797.3 364.1 797.0 366.0 C796.7 367.9 792.5 370.0 788.0 372.0 C783.5 374.0 774.5 376.3 770.0 378.0 C765.5 379.7 767.1 381.4 761.0 382.0 C754.9 382.6 740.6 382.5 733.6 381.4 C726.6 380.3 723.5 378.3 718.7 375.6 C713.9 372.9 707.0 369.9 705.0 365.3 C703.0 360.7 704.3 352.1 707.0 348.0 C709.7 343.9 718.1 345.2 721.0 341.0 C723.9 336.8 722.3 328.7 724.4 322.8 C726.5 316.9 731.2 310.6 733.6 305.6 C736.0 300.6 737.6 295.7 739.0 293.0 C740.4 290.3 738.8 290.3 741.7 289.5Z" fill="#474747"/>
<circle cx="773" cy="397" r="11" fill="#474747"/>
<path d="M719 377 C723 370 730 370 734 376 C730 382 723 382 719 377Z" fill="#060606"/>
<path d="M774 368 C782 362 795 362 800 370 C790 378 780 378 774 368Z" fill="#060606"/>
<path d="M790 366 L850 364" stroke="#484848" stroke-width="2.5"/>
<path d="M800 372 L820 405" stroke="#464646" stroke-width="2.2"/>
<path d="M815 395 L840 400" stroke="#444" stroke-width="1.3"/>
<path d="M806 318 L812 308" stroke="#555" stroke-width="1.3"/>
<ellipse cx="760" cy="432" rx="13" ry="15" fill="#4a4a4a" stroke="#8e8e8e" stroke-width="1.1"/>
<path d="M746 458 L756 452 L768 452 L780 458 L782 463 L768 466 L762 472 L754 466 L742 463Z" fill="#555" stroke="#a8a8a8" stroke-width="1.1"/>
<rect x="757" y="470" width="6" height="9" rx="2" fill="#999"/>
<path d="M730 277 C742 275 754 273 765 272 L767 283 C756 284 744 286 734 289Z" fill="#484848" stroke="#a8a8a8" stroke-width="1.2"/>
<ellipse cx="650" cy="297" rx="4" ry="13" transform="rotate(50 650 297)" fill="#444" stroke="#9a9a9a" stroke-width="1.0"/>
<ellipse cx="626.5" cy="342" rx="4" ry="12" transform="rotate(8 626.5 342)" fill="#444" stroke="#9a9a9a" stroke-width="1.0"/>
<ellipse cx="631" cy="391" rx="4" ry="13" transform="rotate(-14 631 391)" fill="#444" stroke="#9a9a9a" stroke-width="1.0"/>
<ellipse cx="653" cy="437" rx="4" ry="13" transform="rotate(-40 653 437)" fill="#444" stroke="#9a9a9a" stroke-width="1.0"/>
<ellipse cx="863.5" cy="302" rx="4" ry="13" transform="rotate(-50 863.5 302)" fill="#444" stroke="#9a9a9a" stroke-width="1.0"/>
<ellipse cx="881.5" cy="351" rx="4" ry="11.5" transform="rotate(-5 881.5 351)" fill="#444" stroke="#9a9a9a" stroke-width="1.0"/>
<ellipse cx="879" cy="405" rx="4" ry="12.5" transform="rotate(18 879 405)" fill="#444" stroke="#9a9a9a" stroke-width="1.0"/>
<ellipse cx="840" cy="452" rx="4" ry="16" transform="rotate(70 840 452)" fill="#444" stroke="#9a9a9a" stroke-width="1.0"/>
<clipPath id="tcl0"><path d="M673.6 281.0 C681.9 279.8 694.1 281.5 705.0 283.0 C715.9 284.5 734.5 285.6 739.0 290.0 C743.5 294.4 735.0 301.2 732.0 309.5 C729.0 317.8 724.0 333.2 721.0 339.5 C718.0 345.8 716.7 345.4 714.0 347.5 C711.3 349.6 706.7 348.9 705.0 352.0 C703.3 355.1 702.2 362.2 703.7 366.0 C705.2 369.8 707.1 372.8 714.0 375.0 C720.9 377.2 737.0 377.6 745.0 379.0 C753.0 380.4 760.0 380.4 762.0 383.5 C764.0 386.6 760.0 392.4 756.7 397.7 C753.5 402.9 745.5 408.3 742.5 415.0 C739.5 421.7 741.6 430.9 739.0 438.0 C736.4 445.1 732.5 453.2 726.6 457.7 C720.7 462.2 710.5 464.4 703.7 465.0 C696.9 465.6 692.0 464.0 686.0 461.0 C680.0 458.0 673.9 453.2 668.0 447.0 C662.1 440.8 655.7 431.7 650.7 424.0 C645.7 416.3 640.4 406.8 638.0 401.0 C635.6 395.2 637.7 395.4 636.5 389.0 C635.3 382.6 631.6 371.3 631.0 362.5 C630.4 353.7 631.5 345.1 633.0 336.0 C634.5 326.9 636.3 315.7 640.0 308.0 C643.7 300.3 649.4 294.5 655.0 290.0 C660.6 285.5 665.3 282.2 673.6 281.0Z"/></clipPath><g clip-path="url(#tcl0)">
<circle cx="674.8" cy="311.5" r="0.8" fill="#2a2a2a"/>
<circle cx="715.1" cy="297.7" r="0.8" fill="#2a2a2a"/>
<circle cx="700.9" cy="349.4" r="0.8" fill="#2a2a2a"/>
<circle cx="642.1" cy="374.3" r="0.8" fill="#2a2a2a"/>
<circle cx="639.6" cy="361.3" r="0.8" fill="#2a2a2a"/>
<circle cx="643.6" cy="301.0" r="0.8" fill="#2a2a2a"/>
<circle cx="687.2" cy="430.5" r="0.8" fill="#2a2a2a"/>
<circle cx="650.2" cy="324.3" r="0.8" fill="#2a2a2a"/>
<circle cx="712.2" cy="451.8" r="0.8" fill="#2a2a2a"/>
<circle cx="706.0" cy="354.8" r="0.8" fill="#2a2a2a"/>
<circle cx="755.1" cy="293.2" r="0.8" fill="#2a2a2a"/>
<circle cx="740.6" cy="336.0" r="0.8" fill="#2a2a2a"/>
<circle cx="652.7" cy="305.7" r="0.8" fill="#2a2a2a"/>
<circle cx="672.9" cy="428.6" r="0.8" fill="#2a2a2a"/>
<circle cx="657.2" cy="387.4" r="0.8" fill="#2a2a2a"/>
<circle cx="713.6" cy="350.5" r="0.8" fill="#2a2a2a"/>
<circle cx="702.4" cy="296.1" r="0.8" fill="#2a2a2a"/>
<circle cx="642.3" cy="321.2" r="0.8" fill="#2a2a2a"/>
<circle cx="718.7" cy="360.3" r="0.8" fill="#2a2a2a"/>
<circle cx="673.6" cy="388.1" r="0.8" fill="#2a2a2a"/>
<circle cx="690.7" cy="337.8" r="0.8" fill="#2a2a2a"/>
<circle cx="732.7" cy="408.0" r="0.8" fill="#2a2a2a"/>
<circle cx="665.0" cy="386.1" r="0.8" fill="#2a2a2a"/>
<circle cx="699.6" cy="439.0" r="0.8" fill="#2a2a2a"/>
<circle cx="724.7" cy="335.7" r="0.8" fill="#2a2a2a"/>
<circle cx="755.6" cy="305.8" r="0.8" fill="#2a2a2a"/>
<circle cx="686.4" cy="418.3" r="0.8" fill="#2a2a2a"/>
<circle cx="653.7" cy="371.1" r="0.8" fill="#2a2a2a"/>
<circle cx="639.8" cy="402.6" r="0.8" fill="#2a2a2a"/>
<circle cx="729.0" cy="385.9" r="0.8" fill="#2a2a2a"/>
<circle cx="742.7" cy="340.2" r="0.8" fill="#2a2a2a"/>
<circle cx="720.5" cy="389.6" r="0.8" fill="#2a2a2a"/>
<circle cx="706.3" cy="365.3" r="0.8" fill="#2a2a2a"/>
<circle cx="738.3" cy="451.3" r="0.8" fill="#2a2a2a"/>
<circle cx="693.3" cy="401.9" r="0.8" fill="#2a2a2a"/>
<circle cx="642.5" cy="408.5" r="0.8" fill="#2a2a2a"/>
<circle cx="714.6" cy="459.8" r="0.8" fill="#2a2a2a"/>
<circle cx="736.1" cy="335.1" r="0.8" fill="#2a2a2a"/>
<circle cx="682.5" cy="402.7" r="0.8" fill="#2a2a2a"/>
<circle cx="637.8" cy="366.3" r="0.8" fill="#2a2a2a"/>
<circle cx="655.7" cy="305.6" r="0.8" fill="#2a2a2a"/>
<circle cx="642.3" cy="420.2" r="0.8" fill="#2a2a2a"/>
<circle cx="650.9" cy="328.6" r="0.8" fill="#2a2a2a"/>
<circle cx="683.1" cy="438.4" r="0.8" fill="#2a2a2a"/>
<circle cx="644.9" cy="364.1" r="0.8" fill="#2a2a2a"/>
<circle cx="702.6" cy="440.5" r="0.8" fill="#2a2a2a"/>
<circle cx="735.8" cy="437.1" r="0.8" fill="#2a2a2a"/>
<circle cx="669.2" cy="358.1" r="0.8" fill="#2a2a2a"/>
<circle cx="679.1" cy="440.6" r="0.8" fill="#2a2a2a"/>
<circle cx="752.8" cy="311.6" r="0.8" fill="#2a2a2a"/>
<circle cx="656.7" cy="325.8" r="0.8" fill="#2a2a2a"/>
<circle cx="663.7" cy="370.4" r="0.8" fill="#2a2a2a"/>
<circle cx="707.5" cy="331.2" r="0.8" fill="#2a2a2a"/>
<circle cx="635.5" cy="358.7" r="0.8" fill="#2a2a2a"/>
<circle cx="680.4" cy="384.7" r="0.8" fill="#2a2a2a"/>
<circle cx="752.2" cy="406.5" r="0.8" fill="#2a2a2a"/>
<circle cx="698.4" cy="393.7" r="0.8" fill="#2a2a2a"/>
<circle cx="718.2" cy="294.5" r="0.8" fill="#2a2a2a"/>
<circle cx="745.6" cy="422.3" r="0.8" fill="#2a2a2a"/>
<circle cx="742.6" cy="425.4" r="0.8" fill="#2a2a2a"/>
<circle cx="683.3" cy="355.2" r="0.8" fill="#2a2a2a"/>
<circle cx="647.7" cy="396.6" r="0.8" fill="#2a2a2a"/>
<circle cx="642.7" cy="296.9" r="0.8" fill="#2a2a2a"/>
<circle cx="660.7" cy="313.6" r="0.8" fill="#2a2a2a"/>
<circle cx="676.8" cy="294.3" r="0.8" fill="#2a2a2a"/>
<circle cx="635.0" cy="311.6" r="0.8" fill="#2a2a2a"/>
<circle cx="647.5" cy="349.0" r="0.8" fill="#2a2a2a"/>
<circle cx="638.1" cy="438.9" r="0.8" fill="#2a2a2a"/>
<circle cx="710.5" cy="311.1" r="0.8" fill="#2a2a2a"/>
<circle cx="666.0" cy="346.1" r="0.8" fill="#2a2a2a"/>
</g>
<clipPath id="tcl1"><path d="M756.0 288.0 C758.1 283.9 781.0 280.7 793.0 279.5 C805.0 278.3 818.6 279.6 828.0 281.0 C837.4 282.4 843.0 284.2 849.5 288.0 C856.0 291.8 862.9 297.2 867.0 304.0 C871.1 310.8 871.9 320.7 874.0 329.0 C876.1 337.3 878.4 345.2 879.6 353.7 C880.8 362.2 881.9 371.2 881.0 380.0 C880.1 388.8 875.7 400.2 874.0 406.7 C872.3 413.2 873.9 413.4 870.7 419.0 C867.5 424.6 862.1 434.7 855.0 440.0 C847.9 445.3 836.0 448.9 828.0 450.7 C820.0 452.5 813.4 452.1 807.0 450.7 C800.6 449.2 794.5 446.4 789.5 442.0 C784.5 437.6 778.5 428.5 777.0 424.0 C775.5 419.5 779.1 419.4 780.6 415.0 C782.1 410.6 786.8 403.2 786.0 397.7 C785.2 392.2 776.0 387.9 776.0 382.0 C776.0 376.1 784.7 366.7 786.0 362.0 C787.3 357.3 784.5 359.2 784.0 353.7 C783.5 348.2 783.6 337.3 783.0 329.0 C782.4 320.7 785.1 310.8 780.6 304.0 C776.1 297.2 753.9 292.1 756.0 288.0Z"/></clipPath><g clip-path="url(#tcl1)">
<circle cx="802.6" cy="303.5" r="0.8" fill="#2a2a2a"/>
<circle cx="859.3" cy="445.6" r="0.8" fill="#2a2a2a"/>
<circle cx="814.5" cy="362.5" r="0.8" fill="#2a2a2a"/>
<circle cx="770.0" cy="300.2" r="0.8" fill="#2a2a2a"/>
<circle cx="800.1" cy="326.7" r="0.8" fill="#2a2a2a"/>
<circle cx="857.0" cy="309.8" r="0.8" fill="#2a2a2a"/>
<circle cx="762.7" cy="438.7" r="0.8" fill="#2a2a2a"/>
<circle cx="821.8" cy="307.4" r="0.8" fill="#2a2a2a"/>
<circle cx="823.6" cy="287.9" r="0.8" fill="#2a2a2a"/>
<circle cx="821.8" cy="443.2" r="0.8" fill="#2a2a2a"/>
<circle cx="861.0" cy="397.1" r="0.8" fill="#2a2a2a"/>
<circle cx="790.6" cy="343.3" r="0.8" fill="#2a2a2a"/>
<circle cx="779.5" cy="409.5" r="0.8" fill="#2a2a2a"/>
<circle cx="822.3" cy="410.6" r="0.8" fill="#2a2a2a"/>
<circle cx="798.6" cy="319.9" r="0.8" fill="#2a2a2a"/>
<circle cx="854.9" cy="444.2" r="0.8" fill="#2a2a2a"/>
<circle cx="859.8" cy="415.1" r="0.8" fill="#2a2a2a"/>
<circle cx="855.7" cy="404.2" r="0.8" fill="#2a2a2a"/>
<circle cx="786.5" cy="368.0" r="0.8" fill="#2a2a2a"/>
<circle cx="801.6" cy="288.2" r="0.8" fill="#2a2a2a"/>
<circle cx="763.3" cy="329.1" r="0.8" fill="#2a2a2a"/>
<circle cx="790.3" cy="396.5" r="0.8" fill="#2a2a2a"/>
<circle cx="871.9" cy="356.5" r="0.8" fill="#2a2a2a"/>
<circle cx="869.6" cy="444.7" r="0.8" fill="#2a2a2a"/>
<circle cx="871.7" cy="343.0" r="0.8" fill="#2a2a2a"/>
<circle cx="785.8" cy="320.5" r="0.8" fill="#2a2a2a"/>
<circle cx="783.0" cy="316.9" r="0.8" fill="#2a2a2a"/>
<circle cx="833.0" cy="430.4" r="0.8" fill="#2a2a2a"/>
<circle cx="858.3" cy="361.8" r="0.8" fill="#2a2a2a"/>
<circle cx="836.4" cy="414.0" r="0.8" fill="#2a2a2a"/>
<circle cx="769.9" cy="391.3" r="0.8" fill="#2a2a2a"/>
<circle cx="866.4" cy="411.2" r="0.8" fill="#2a2a2a"/>
<circle cx="847.8" cy="361.5" r="0.8" fill="#2a2a2a"/>
<circle cx="780.9" cy="412.3" r="0.8" fill="#2a2a2a"/>
<circle cx="798.9" cy="414.2" r="0.8" fill="#2a2a2a"/>
<circle cx="873.7" cy="348.1" r="0.8" fill="#2a2a2a"/>
<circle cx="807.0" cy="438.0" r="0.8" fill="#2a2a2a"/>
<circle cx="844.8" cy="311.2" r="0.8" fill="#2a2a2a"/>
<circle cx="774.9" cy="308.2" r="0.8" fill="#2a2a2a"/>
<circle cx="865.9" cy="415.1" r="0.8" fill="#2a2a2a"/>
<circle cx="777.1" cy="418.4" r="0.8" fill="#2a2a2a"/>
<circle cx="874.7" cy="390.8" r="0.8" fill="#2a2a2a"/>
<circle cx="801.0" cy="373.0" r="0.8" fill="#2a2a2a"/>
<circle cx="775.3" cy="285.8" r="0.8" fill="#2a2a2a"/>
<circle cx="873.6" cy="389.5" r="0.8" fill="#2a2a2a"/>
<circle cx="821.6" cy="435.9" r="0.8" fill="#2a2a2a"/>
<circle cx="810.8" cy="425.8" r="0.8" fill="#2a2a2a"/>
<circle cx="856.7" cy="317.9" r="0.8" fill="#2a2a2a"/>
<circle cx="789.5" cy="331.3" r="0.8" fill="#2a2a2a"/>
<circle cx="788.1" cy="379.2" r="0.8" fill="#2a2a2a"/>
<circle cx="790.3" cy="351.9" r="0.8" fill="#2a2a2a"/>
<circle cx="775.3" cy="432.0" r="0.8" fill="#2a2a2a"/>
<circle cx="801.4" cy="358.3" r="0.8" fill="#2a2a2a"/>
<circle cx="828.3" cy="431.1" r="0.8" fill="#2a2a2a"/>
<circle cx="809.2" cy="433.3" r="0.8" fill="#2a2a2a"/>
<circle cx="818.7" cy="370.3" r="0.8" fill="#2a2a2a"/>
<circle cx="821.3" cy="286.6" r="0.8" fill="#2a2a2a"/>
<circle cx="811.5" cy="313.4" r="0.8" fill="#2a2a2a"/>
<circle cx="760.5" cy="413.9" r="0.8" fill="#2a2a2a"/>
<circle cx="780.2" cy="360.8" r="0.8" fill="#2a2a2a"/>
</g>
</g><filter id="grain1" x="0" y="0" width="100%" height="100%" filterUnits="objectBoundingBox" color-interpolation-filters="sRGB"><feTurbulence type="fractalNoise" baseFrequency="0.85 0.5" numOctaves="2" seed="1"/><feColorMatrix type="matrix" values="0.33 0.33 0.33 0 0 0.33 0.33 0.33 0 0 0.33 0.33 0.33 0 0 0 0 0 0 1"/></filter><rect x="569" y="168" width="385" height="385" filter="url(#grain1)" style="mix-blend-mode:overlay" opacity="0.65"/></svg>
<svg style="left:1148px;top:147px" width="772" height="448" viewBox="1148 147 772 448"><defs><filter id="sb" x="-5%" y="-5%" width="110%" height="110%"><feGaussianBlur stdDeviation="0.7"/></filter></defs>
<clipPath id="sfr"><rect x="1276" y="168" width="516" height="385"/></clipPath><g clip-path="url(#sfr)"><g filter="url(#sb)">
<path d="M1708 168 C1712 230 1712 300 1712 360 C1712 450 1706 500 1704 553" fill="none" stroke="#2a2a2a" stroke-width="1.2"/>
<rect x="1735.5" y="168" width="3.5" height="385" fill="#555"/>
<rect x="1783" y="168" width="2.2" height="385" fill="#3a3a3a"/>
<path d="M1381 365 C1372 400 1367 450 1366 553" fill="none" stroke="#2a2a2a" stroke-width="1"/>
<path d="M1389.0 140.0 C1343.8 144.7 1388.4 161.0 1389.0 168.0 C1389.6 175.0 1390.8 178.5 1392.6 182.0 C1394.3 185.5 1394.4 187.0 1399.5 189.0 C1404.6 191.0 1415.3 192.8 1423.0 194.0 C1430.7 195.2 1440.9 194.8 1445.5 196.0 C1450.1 197.2 1450.8 198.7 1450.6 201.0 C1450.3 203.3 1445.8 206.8 1444.0 209.6 C1442.2 212.4 1440.9 212.9 1440.0 218.0 C1439.1 223.1 1440.0 233.7 1438.7 240.0 C1437.4 246.3 1434.3 249.4 1432.0 255.7 C1429.7 262.0 1427.8 270.1 1425.0 278.0 C1422.2 285.9 1418.4 294.9 1415.0 303.4 C1411.6 311.9 1407.8 320.4 1404.6 329.0 C1401.4 337.6 1399.3 344.8 1396.0 355.0 C1392.7 365.2 1388.2 378.2 1384.5 390.0 C1380.8 401.8 1376.3 413.9 1374.0 425.7 C1371.7 437.5 1371.2 448.6 1370.4 461.0 C1369.7 473.4 1369.7 484.7 1369.5 500.0 C1369.3 515.3 1369.6 536.3 1369.5 553.0 C1369.4 569.7 1314.9 592.2 1369.0 600.0 C1423.1 607.8 1639.8 607.8 1694.0 600.0 C1748.2 592.2 1693.3 567.3 1694.0 553.0 C1694.7 538.7 1695.6 527.8 1698.0 514.0 C1700.4 500.2 1705.6 483.2 1708.5 470.0 C1711.4 456.8 1713.5 447.8 1715.5 434.5 C1717.5 421.2 1719.9 403.2 1720.8 390.0 C1721.7 376.8 1721.8 366.6 1720.8 355.0 C1719.8 343.4 1717.7 335.9 1715.0 320.5 C1712.3 305.1 1706.9 276.1 1704.6 262.5 C1702.3 248.8 1705.3 248.8 1701.0 238.6 C1696.7 228.3 1685.2 212.8 1679.0 201.0 C1672.8 189.2 1666.9 178.2 1663.7 168.0 C1660.5 157.8 1705.8 144.7 1660.0 140.0 C1614.2 135.3 1434.2 135.3 1389.0 140.0Z" fill="#404040"/>
<ellipse cx="1510" cy="420" rx="65" ry="75" fill="#414141"/>
<ellipse cx="1490" cy="510" rx="70" ry="45" fill="#3e3e3e"/>
<path d="M1400 395 C1395 430 1392 480 1395 553 L1420 553 C1415 480 1418 430 1425 390Z" fill="#424242"/>
<path d="M1552.0 140.0 C1547.5 144.7 1555.0 154.7 1558.0 168.0 C1561.0 181.3 1565.5 201.3 1570.0 220.0 C1574.5 238.7 1580.0 260.0 1585.0 280.0 C1590.0 300.0 1596.5 326.7 1600.0 340.0 C1603.5 353.3 1605.7 346.7 1606.0 360.0 C1606.3 373.3 1604.7 400.0 1602.0 420.0 C1599.3 440.0 1594.3 457.8 1590.0 480.0 C1585.7 502.2 1579.0 533.0 1576.0 553.0 C1573.0 573.0 1565.0 592.2 1572.0 600.0 C1579.0 607.8 1609.7 607.8 1618.0 600.0 C1626.3 592.2 1620.0 569.7 1622.0 553.0 C1624.0 536.3 1627.0 517.2 1630.0 500.0 C1633.0 482.8 1637.5 470.0 1640.0 450.0 C1642.5 430.0 1645.0 398.3 1645.0 380.0 C1645.0 361.7 1643.3 355.0 1640.0 340.0 C1636.7 325.0 1630.8 308.3 1625.0 290.0 C1619.2 271.7 1610.8 250.3 1605.0 230.0 C1599.2 209.7 1593.3 183.0 1590.0 168.0 C1586.7 153.0 1591.3 144.7 1585.0 140.0 C1578.7 135.3 1556.5 135.3 1552.0 140.0Z" fill="#535353" stroke="#a0a0a0" stroke-width="1.2"/>
<path d="M1563.3 190 l38 3" stroke="#8a8a8a" stroke-width="1.3"/>
<path d="M1569.6 232 l38 3" stroke="#8a8a8a" stroke-width="1.3"/>
<path d="M1575.9 274 l38 3" stroke="#8a8a8a" stroke-width="1.3"/>
<path d="M1582.2 316 l38 3" stroke="#8a8a8a" stroke-width="1.3"/>
<path d="M1588.5 358 l38 3" stroke="#8a8a8a" stroke-width="1.3"/>
<path d="M1600.0 400 l38 3" stroke="#8a8a8a" stroke-width="1.3"/>
<path d="M1593.7 442 l38 3" stroke="#8a8a8a" stroke-width="1.3"/>
<path d="M1587.4 484 l38 3" stroke="#8a8a8a" stroke-width="1.3"/>
<path d="M1581.1 526 l38 3" stroke="#8a8a8a" stroke-width="1.3"/>
<path d="M1585.0 140.0 C1583.5 144.7 1586.7 153.0 1590.0 168.0 C1593.3 183.0 1599.2 209.7 1605.0 230.0 C1610.8 250.3 1619.2 271.7 1625.0 290.0 C1630.8 308.3 1636.7 325.0 1640.0 340.0 C1643.3 355.0 1645.0 361.7 1645.0 380.0 C1645.0 398.3 1642.5 430.0 1640.0 450.0 C1637.5 470.0 1633.0 482.8 1630.0 500.0 C1627.0 517.2 1624.0 536.3 1622.0 553.0 C1620.0 569.7 1616.3 592.2 1618.0 600.0 C1619.7 607.8 1629.0 607.8 1632.0 600.0 C1635.0 592.2 1633.8 569.7 1636.0 553.0 C1638.2 536.3 1641.8 517.2 1645.0 500.0 C1648.2 482.8 1652.5 470.0 1655.0 450.0 C1657.5 430.0 1660.0 400.0 1660.0 380.0 C1660.0 360.0 1658.3 346.7 1655.0 330.0 C1651.7 313.3 1645.8 298.3 1640.0 280.0 C1634.2 261.7 1626.0 238.7 1620.0 220.0 C1614.0 201.3 1607.5 181.3 1604.0 168.0 C1600.5 154.7 1602.2 144.7 1599.0 140.0 C1595.8 135.3 1586.5 135.3 1585.0 140.0Z" fill="#363636"/>
<ellipse cx="1603.0" cy="175.5" rx="4.5" ry="6.2" transform="rotate(-28 1603.0 175.5)" fill="#484848" stroke="#a8a8a8" stroke-width="1.2"/>
<ellipse cx="1615.1" cy="198.0" rx="4.5" ry="8.5" transform="rotate(-28 1615.1 198.0)" fill="#484848" stroke="#a8a8a8" stroke-width="1.2"/>
<ellipse cx="1627.5" cy="222.0" rx="4.5" ry="9.5" transform="rotate(-28 1627.5 222.0)" fill="#484848" stroke="#a8a8a8" stroke-width="1.2"/>
<ellipse cx="1639.8" cy="245.3" rx="4.5" ry="9.8" transform="rotate(-28 1639.8 245.3)" fill="#484848" stroke="#a8a8a8" stroke-width="1.2"/>
<ellipse cx="1650.1" cy="271.0" rx="4.5" ry="11.4" transform="rotate(-28 1650.1 271.0)" fill="#484848" stroke="#a8a8a8" stroke-width="1.2"/>
<ellipse cx="1660.3" cy="303.0" rx="4.5" ry="13.3" transform="rotate(-28 1660.3 303.0)" fill="#484848" stroke="#a8a8a8" stroke-width="1.2"/>
<ellipse cx="1667.8" cy="337.1" rx="4.5" ry="16.6" transform="rotate(-28 1667.8 337.1)" fill="#484848" stroke="#a8a8a8" stroke-width="1.2"/>
<ellipse cx="1676.7" cy="378.0" rx="4.5" ry="19.0" transform="rotate(-28 1676.7 378.0)" fill="#484848" stroke="#a8a8a8" stroke-width="1.2"/>
<ellipse cx="1674.5" cy="407.9" rx="4.5" ry="17.0" transform="rotate(-28 1674.5 407.9)" fill="#484848" stroke="#a8a8a8" stroke-width="1.2"/>
<ellipse cx="1671.7" cy="437.0" rx="4.5" ry="16.1" transform="rotate(-28 1671.7 437.0)" fill="#484848" stroke="#a8a8a8" stroke-width="1.2"/>
<ellipse cx="1668.2" cy="468.9" rx="4.5" ry="16.0" transform="rotate(-28 1668.2 468.9)" fill="#484848" stroke="#a8a8a8" stroke-width="1.2"/>
<ellipse cx="1663.4" cy="503.5" rx="4.5" ry="14.7" transform="rotate(-28 1663.4 503.5)" fill="#484848" stroke="#a8a8a8" stroke-width="1.2"/>
<ellipse cx="1658.1" cy="539.5" rx="4.5" ry="12.8" transform="rotate(-28 1658.1 539.5)" fill="#484848" stroke="#a8a8a8" stroke-width="1.2"/>
<path d="M1510.0 189.0 C1512.6 185.9 1522.4 178.4 1525.6 179.0 C1528.8 179.6 1525.6 187.5 1529.0 192.6 C1532.4 197.7 1542.3 204.5 1546.0 209.6 C1549.7 214.7 1549.8 216.8 1551.0 223.0 C1552.2 229.2 1555.0 242.7 1553.0 247.0 C1551.0 251.3 1541.9 251.5 1539.0 249.0 C1536.1 246.5 1539.5 239.2 1535.8 232.0 C1532.1 224.8 1521.3 211.7 1517.0 206.0 C1512.7 200.3 1511.2 200.5 1510.0 197.7 C1508.8 194.9 1507.4 192.1 1510.0 189.0Z" fill="#060606"/>
<path d="M1571.6 233.5 C1573.0 231.3 1578.3 233.5 1580.0 238.6 C1581.7 243.7 1582.8 259.2 1582.0 264.0 C1581.2 268.8 1576.7 269.6 1575.0 267.6 C1573.3 265.6 1572.2 257.7 1571.6 252.0 C1571.0 246.3 1570.2 235.7 1571.6 233.5Z" fill="#060606"/>
<path d="M1543.5 293.0 C1545.5 289.8 1552.4 288.4 1556.0 293.0 C1559.6 297.6 1563.8 311.4 1565.0 320.5 C1566.2 329.6 1565.0 342.7 1563.0 347.8 C1561.0 352.9 1555.2 353.3 1553.0 351.0 C1550.8 348.7 1551.0 340.5 1549.5 334.0 C1548.0 327.5 1545.0 318.8 1544.0 312.0 C1543.0 305.2 1541.5 296.2 1543.5 293.0Z" fill="#060606"/>
<path d="M1575.0 296.6 C1577.3 292.9 1585.7 294.0 1588.7 298.0 C1591.7 302.0 1592.8 311.8 1593.0 320.5 C1593.2 329.2 1591.8 342.6 1590.0 350.0 C1588.2 357.4 1585.7 363.0 1582.0 365.0 C1578.3 367.0 1569.7 366.6 1568.0 362.0 C1566.3 357.4 1570.4 344.4 1571.6 337.5 C1572.8 330.6 1574.4 327.3 1575.0 320.5 C1575.6 313.7 1572.7 300.4 1575.0 296.6Z" fill="#060606"/>
<path d="M1476.0 252.0 C1480.5 248.8 1490.5 248.3 1493.0 253.0 C1495.5 257.7 1493.0 270.8 1491.0 280.0 C1489.0 289.2 1483.2 301.0 1481.0 308.0 C1478.8 315.0 1481.2 315.3 1478.0 322.0 C1474.8 328.7 1467.5 340.3 1462.0 348.0 C1456.5 355.7 1449.2 364.0 1445.0 368.0 C1440.8 372.0 1438.5 374.2 1437.0 372.0 C1435.5 369.8 1434.5 363.3 1436.0 355.0 C1437.5 346.7 1442.8 331.2 1446.0 322.0 C1449.2 312.8 1451.7 308.3 1455.0 300.0 C1458.3 291.7 1462.5 280.0 1466.0 272.0 C1469.5 264.0 1471.5 255.2 1476.0 252.0Z" fill="#060606"/>
<path d="M1466 215 C1480 210 1488 225 1480 245 L1448 320 C1440 345 1425 370 1412 385 C1404 392 1400 380 1405 372 L1440 300 Z" fill="#474747" stroke="#a0a0a0" stroke-width="1.2"/>
<ellipse cx="1408" cy="392" rx="5" ry="4" fill="#999"/>
<ellipse cx="1417" cy="170" rx="6" ry="4" fill="#b8b8b8"/>
</g></g><filter id="grain2" x="0" y="0" width="100%" height="100%" filterUnits="objectBoundingBox" color-interpolation-filters="sRGB"><feTurbulence type="fractalNoise" baseFrequency="0.85 0.5" numOctaves="2" seed="2"/><feColorMatrix type="matrix" values="0.33 0.33 0.33 0 0 0.33 0.33 0.33 0 0 0.33 0.33 0.33 0 0 0 0 0 0 1"/></filter><rect x="1276" y="168" width="516" height="385" filter="url(#grain2)" style="mix-blend-mode:overlay" opacity="0.65"/></svg>
<svg style="left:376px;top:639px" width="771" height="450" viewBox="376 639 771 450"><defs><filter id="cb" x="-5%" y="-5%" width="110%" height="110%"><feGaussianBlur stdDeviation="0.7"/></filter></defs>
<g filter="url(#cb)">
<path d="M502.0 660.0 L513.0 660.0 L519.9 701.8 L526.7 732.7 L534.4 746.4 L537.0 755.0 L538.7 813.0 L540.4 853.0 L535.5 956.0 L532.0 1047.0 L950.5 1047.0 L954.0 990.8 L961.0 904.7 L970.0 853.0 L987.0 804.7 L997.5 761.8 L1004.0 710.4 L1006.0 660.0Z" fill="#3e3e3e"/>
<path d="M1006 660 L1021 660 L1021 1047 L950 1047 C955 990 962 905 970 853 C990 800 1000 760 1006 660Z" fill="#0a0a0a"/>
<path d="M1016 700 C1012 800 1000 900 990 1040" fill="none" stroke="#262626" stroke-width="1"/>
<path d="M651.8 705.3 C658.4 700.6 665.0 700.9 672.4 699.3 C679.8 697.7 689.8 695.7 696.4 695.8 C703.0 695.9 707.2 696.7 711.8 700.0 C716.4 703.3 720.4 709.6 723.8 715.6 C727.2 721.6 730.7 728.3 732.4 736.0 C734.1 743.7 734.3 754.1 734.0 761.8 C733.7 769.5 732.9 777.0 730.6 782.4 C728.3 787.8 723.5 794.1 720.4 794.4 C717.3 794.7 715.5 786.0 711.8 784.0 C708.1 782.0 700.6 780.4 698.0 782.4 C695.4 784.4 697.4 784.2 696.4 796.0 C695.4 807.8 693.1 840.0 692.0 853.0 C690.9 866.0 687.4 868.5 690.0 873.7 C692.6 878.9 704.8 878.8 707.8 884.0 C710.8 889.2 702.1 895.5 707.8 904.7 C713.5 913.9 735.7 927.5 742.0 939.0 C748.3 950.5 745.7 967.3 745.7 973.6 C745.7 979.9 748.3 978.7 742.0 977.0 C735.7 975.3 719.2 967.3 707.8 963.3 C696.3 959.3 684.8 955.2 673.3 953.0 C661.8 950.8 650.5 950.3 639.0 950.3 C627.5 950.3 614.5 950.5 604.4 953.0 C594.3 955.5 586.0 959.3 578.5 965.0 C571.0 970.7 563.0 991.7 559.6 987.4 C556.2 983.1 556.3 953.6 558.0 939.0 C559.7 924.4 565.4 913.8 570.0 899.5 C574.6 885.2 580.9 867.4 585.4 853.0 C589.9 838.6 593.9 825.3 597.0 813.0 C600.1 800.7 600.4 789.0 603.8 779.0 C607.2 769.0 612.6 761.6 617.5 753.0 C622.4 744.4 627.3 735.5 633.0 727.5 C638.7 719.5 645.2 710.0 651.8 705.3Z" fill="#060606"/>
<path d="M805.6 695.8 C812.5 692.7 820.9 693.7 829.5 695.0 C838.1 696.3 849.0 699.6 857.0 703.6 C865.0 707.6 871.8 713.9 877.5 719.0 C883.2 724.1 886.8 727.3 891.0 734.4 C895.2 741.5 899.8 752.9 903.0 761.8 C906.2 770.6 908.0 777.5 910.0 787.5 C912.0 797.5 913.2 810.9 915.0 821.8 C916.8 832.7 919.4 845.0 921.0 853.0 C922.6 861.0 922.7 861.4 924.7 870.0 C926.8 878.6 931.9 887.4 933.3 904.7 C934.7 922.0 933.9 954.4 933.3 973.6 C932.7 992.8 934.1 1017.1 929.8 1020.0 C925.5 1022.9 918.3 998.5 907.4 990.8 C896.5 983.1 880.2 977.9 864.4 973.6 C848.6 969.3 828.2 966.1 812.7 965.0 C797.2 963.9 777.9 968.7 771.3 966.7 C764.7 964.7 767.2 956.7 773.0 953.0 C778.8 949.3 799.5 949.5 805.8 944.3 C812.1 939.1 813.0 934.4 811.0 922.0 C809.0 909.6 795.7 882.0 793.7 870.0 C791.7 858.0 797.6 856.7 799.0 850.0 C800.4 843.3 801.2 836.2 802.0 830.0 C802.8 823.8 806.8 817.8 804.0 813.0 C801.2 808.2 787.9 804.6 785.0 801.2 C782.1 797.8 785.0 796.4 786.7 792.7 C788.4 789.0 793.3 783.0 795.0 779.0 C796.7 775.0 798.4 772.7 797.0 768.7 C795.6 764.7 789.3 760.5 786.7 755.0 C784.1 749.5 781.3 742.9 781.6 736.0 C781.9 729.1 784.4 720.5 788.4 713.8 C792.4 707.1 798.8 698.9 805.6 695.8Z" fill="#060606"/>
<path d="M747.8 689.8 C749.8 687.5 755.8 687.5 758.0 688.0 C760.2 688.5 761.0 685.0 761.0 693.0 C761.0 701.0 759.3 724.0 758.0 736.0 C756.7 748.0 755.3 759.5 753.0 765.0 C750.7 770.5 746.4 772.1 744.4 768.7 C742.4 765.3 740.7 755.9 741.0 744.7 C741.3 733.6 744.9 710.9 746.0 701.8 C747.1 692.6 745.8 692.1 747.8 689.8Z" fill="#060606"/>
<path d="M745.0 768.0 C739.7 770.7 737.5 773.5 733.0 778.0 C728.5 782.5 724.5 792.5 717.7 795.0 C711.0 797.5 697.0 785.2 692.5 793.0 C688.0 800.8 693.1 828.0 690.5 841.6 C687.9 855.2 674.8 868.8 677.0 874.6 C679.2 880.4 698.8 873.0 704.0 876.6 C709.2 880.2 704.4 888.6 708.0 896.0 C711.6 903.4 719.3 913.2 725.5 921.0 C731.7 928.8 741.1 935.4 745.0 942.7 C748.9 950.0 744.5 961.3 749.0 965.0 C753.5 968.7 768.2 966.8 772.0 965.0 C775.8 963.2 766.2 957.4 772.0 954.0 C777.8 950.6 800.8 949.8 807.0 944.6 C813.2 939.4 810.3 933.0 809.0 923.0 C807.7 913.0 801.5 894.7 799.3 884.4 C797.0 874.1 795.2 867.2 795.5 861.0 C795.8 854.8 799.4 852.9 801.0 847.4 C802.6 841.9 803.3 833.5 805.0 828.0 C806.7 822.5 811.7 818.3 811.0 814.4 C810.3 810.5 804.9 807.3 801.0 804.7 C797.1 802.1 789.0 804.0 787.7 799.0 C786.4 794.0 793.5 780.7 793.0 775.0 C792.5 769.3 789.7 767.2 785.0 765.0 C780.3 762.8 771.7 761.5 765.0 762.0 C758.3 762.5 750.3 765.3 745.0 768.0Z" fill="#464646"/>
<path d="M700 880 C720 860 760 840 800 850" fill="none" stroke="#3c3c3c" stroke-width="1.5"/>
<path d="M560 990 C600 955 680 950 745 978 C800 965 870 975 930 1022 L950 1047 L536 1047Z" fill="#404040"/>
<path d="M700 826 L645 830" stroke="#484848" stroke-width="4.5" stroke-linecap="round"/>
<path d="M697 790 C694 815 690 850 692 875" stroke="#444" stroke-width="5" fill="none"/>
<path d="M810 800 C808 780 805 770 806 760" stroke="#444" stroke-width="4" fill="none"/>
<path d="M812 866 L835 866" stroke="#4a4a4a" stroke-width="3" fill="none"/>
<ellipse cx="818" cy="833" rx="5" ry="6" fill="#060606" stroke="#555" stroke-width="1"/>
<ellipse cx="702" cy="810" rx="4" ry="5" fill="#060606"/>
<path d="M820 862 L845 858 L880 854" stroke="#484848" stroke-width="3" fill="none"/>
<path d="M840 780 L860 770" stroke="#555" stroke-width="2.2"/>
<path d="M830 880 L905 870" stroke="#464646" stroke-width="2.2"/>
<ellipse cx="795" cy="962" rx="16" ry="8" fill="#060606"/>
<path d="M623 690 C628 680 640 680 645 688 C645 694 632 696 623 690Z" fill="#e8e8e8"/>
<ellipse cx="685" cy="691" rx="9" ry="4" transform="rotate(-8 685 691)" fill="none" stroke="#8e8e8e" stroke-width="1.0"/>
<ellipse cx="643" cy="710" rx="8" ry="4" transform="rotate(-20 643 710)" fill="none" stroke="#8e8e8e" stroke-width="1.0"/>
<ellipse cx="618" cy="750" rx="5" ry="7" transform="rotate(30 618 750)" fill="none" stroke="#8e8e8e" stroke-width="1.0"/>
<ellipse cx="601" cy="780" rx="5" ry="7" transform="rotate(25 601 780)" fill="none" stroke="#8e8e8e" stroke-width="1.0"/>
<ellipse cx="591" cy="812" rx="5" ry="7" transform="rotate(15 591 812)" fill="none" stroke="#8e8e8e" stroke-width="1.0"/>
<ellipse cx="583" cy="838" rx="4" ry="8" transform="rotate(10 583 838)" fill="none" stroke="#8e8e8e" stroke-width="1.0"/>
<ellipse cx="571" cy="876" rx="4" ry="8" transform="rotate(15 571 876)" fill="none" stroke="#8e8e8e" stroke-width="1.0"/>
<ellipse cx="557" cy="923" rx="4" ry="8" transform="rotate(10 557 923)" fill="none" stroke="#8e8e8e" stroke-width="1.0"/>
<ellipse cx="556" cy="979" rx="4" ry="8" transform="rotate(5 556 979)" fill="none" stroke="#8e8e8e" stroke-width="1.0"/>
<ellipse cx="818" cy="690" rx="9" ry="4" transform="rotate(8 818 690)" fill="none" stroke="#8e8e8e" stroke-width="1.0"/>
<ellipse cx="874" cy="711" rx="8" ry="4" transform="rotate(15 874 711)" fill="none" stroke="#8e8e8e" stroke-width="1.0"/>
<ellipse cx="898" cy="745" rx="5" ry="7" transform="rotate(-25 898 745)" fill="none" stroke="#8e8e8e" stroke-width="1.0"/>
<ellipse cx="912" cy="778" rx="5" ry="7" transform="rotate(-20 912 778)" fill="none" stroke="#8e8e8e" stroke-width="1.0"/>
<ellipse cx="919" cy="810" rx="4" ry="8" transform="rotate(-10 919 810)" fill="none" stroke="#8e8e8e" stroke-width="1.0"/>
<ellipse cx="930" cy="888" rx="4" ry="8" transform="rotate(-10 930 888)" fill="none" stroke="#8e8e8e" stroke-width="1.0"/>
<ellipse cx="937" cy="930" rx="4" ry="8" transform="rotate(-10 937 930)" fill="none" stroke="#8e8e8e" stroke-width="1.0"/>
<ellipse cx="935" cy="977" rx="4" ry="8" transform="rotate(-5 935 977)" fill="none" stroke="#8e8e8e" stroke-width="1.0"/>
<ellipse cx="933" cy="1040" rx="4" ry="7" transform="rotate(10 933 1040)" fill="none" stroke="#8e8e8e" stroke-width="1.0"/>
<ellipse cx="932" cy="668" rx="10" ry="5" transform="rotate(15 932 668)" fill="none" stroke="#8e8e8e" stroke-width="1.0"/>
<clipPath id="ccl0"><path d="M651.8 705.3 C658.4 700.6 665.0 700.9 672.4 699.3 C679.8 697.7 689.8 695.7 696.4 695.8 C703.0 695.9 707.2 696.7 711.8 700.0 C716.4 703.3 720.4 709.6 723.8 715.6 C727.2 721.6 730.7 728.3 732.4 736.0 C734.1 743.7 734.3 754.1 734.0 761.8 C733.7 769.5 732.9 777.0 730.6 782.4 C728.3 787.8 723.5 794.1 720.4 794.4 C717.3 794.7 715.5 786.0 711.8 784.0 C708.1 782.0 700.6 780.4 698.0 782.4 C695.4 784.4 697.4 784.2 696.4 796.0 C695.4 807.8 693.1 840.0 692.0 853.0 C690.9 866.0 687.4 868.5 690.0 873.7 C692.6 878.9 704.8 878.8 707.8 884.0 C710.8 889.2 702.1 895.5 707.8 904.7 C713.5 913.9 735.7 927.5 742.0 939.0 C748.3 950.5 745.7 967.3 745.7 973.6 C745.7 979.9 748.3 978.7 742.0 977.0 C735.7 975.3 719.2 967.3 707.8 963.3 C696.3 959.3 684.8 955.2 673.3 953.0 C661.8 950.8 650.5 950.3 639.0 950.3 C627.5 950.3 614.5 950.5 604.4 953.0 C594.3 955.5 586.0 959.3 578.5 965.0 C571.0 970.7 563.0 991.7 559.6 987.4 C556.2 983.1 556.3 953.6 558.0 939.0 C559.7 924.4 565.4 913.8 570.0 899.5 C574.6 885.2 580.9 867.4 585.4 853.0 C589.9 838.6 593.9 825.3 597.0 813.0 C600.1 800.7 600.4 789.0 603.8 779.0 C607.2 769.0 612.6 761.6 617.5 753.0 C622.4 744.4 627.3 735.5 633.0 727.5 C638.7 719.5 645.2 710.0 651.8 705.3Z"/></clipPath><g clip-path="url(#ccl0)">
<circle cx="642.9" cy="859.0" r="0.8" fill="#2c2c2c"/>
<circle cx="731.5" cy="831.6" r="0.8" fill="#2c2c2c"/>
<circle cx="653.3" cy="867.1" r="0.8" fill="#2c2c2c"/>
<circle cx="592.7" cy="845.1" r="0.8" fill="#2c2c2c"/>
<circle cx="676.2" cy="927.0" r="0.8" fill="#2c2c2c"/>
<circle cx="575.7" cy="784.3" r="0.8" fill="#2c2c2c"/>
<circle cx="575.0" cy="931.9" r="0.8" fill="#2c2c2c"/>
<circle cx="688.2" cy="708.0" r="0.8" fill="#2c2c2c"/>
<circle cx="742.4" cy="977.1" r="0.8" fill="#2c2c2c"/>
<circle cx="680.7" cy="875.3" r="0.8" fill="#2c2c2c"/>
<circle cx="587.6" cy="700.2" r="0.8" fill="#2c2c2c"/>
<circle cx="657.2" cy="713.2" r="0.8" fill="#2c2c2c"/>
<circle cx="593.7" cy="766.4" r="0.8" fill="#2c2c2c"/>
<circle cx="563.6" cy="831.1" r="0.8" fill="#2c2c2c"/>
<circle cx="640.7" cy="941.5" r="0.8" fill="#2c2c2c"/>
<circle cx="655.4" cy="882.5" r="0.8" fill="#2c2c2c"/>
<circle cx="651.8" cy="889.0" r="0.8" fill="#2c2c2c"/>
<circle cx="643.8" cy="776.9" r="0.8" fill="#2c2c2c"/>
<circle cx="745.3" cy="986.1" r="0.8" fill="#2c2c2c"/>
<circle cx="715.7" cy="902.2" r="0.8" fill="#2c2c2c"/>
<circle cx="617.2" cy="762.8" r="0.8" fill="#2c2c2c"/>
<circle cx="612.3" cy="716.3" r="0.8" fill="#2c2c2c"/>
<circle cx="701.8" cy="812.6" r="0.8" fill="#2c2c2c"/>
<circle cx="716.9" cy="808.5" r="0.8" fill="#2c2c2c"/>
<circle cx="737.8" cy="942.9" r="0.8" fill="#2c2c2c"/>
<circle cx="558.1" cy="757.0" r="0.8" fill="#2c2c2c"/>
<circle cx="728.9" cy="832.8" r="0.8" fill="#2c2c2c"/>
<circle cx="742.0" cy="811.7" r="0.8" fill="#2c2c2c"/>
<circle cx="571.7" cy="879.3" r="0.8" fill="#2c2c2c"/>
<circle cx="704.1" cy="774.5" r="0.8" fill="#2c2c2c"/>
<circle cx="574.4" cy="792.8" r="0.8" fill="#2c2c2c"/>
<circle cx="739.0" cy="916.8" r="0.8" fill="#2c2c2c"/>
<circle cx="580.1" cy="767.6" r="0.8" fill="#2c2c2c"/>
<circle cx="577.0" cy="713.3" r="0.8" fill="#2c2c2c"/>
<circle cx="707.6" cy="747.6" r="0.8" fill="#2c2c2c"/>
<circle cx="663.0" cy="826.3" r="0.8" fill="#2c2c2c"/>
<circle cx="593.8" cy="909.2" r="0.8" fill="#2c2c2c"/>
<circle cx="582.6" cy="883.5" r="0.8" fill="#2c2c2c"/>
<circle cx="579.9" cy="818.5" r="0.8" fill="#2c2c2c"/>
<circle cx="598.0" cy="774.5" r="0.8" fill="#2c2c2c"/>
<circle cx="740.2" cy="930.1" r="0.8" fill="#2c2c2c"/>
<circle cx="615.1" cy="953.8" r="0.8" fill="#2c2c2c"/>
<circle cx="597.6" cy="810.8" r="0.8" fill="#2c2c2c"/>
<circle cx="718.4" cy="883.0" r="0.8" fill="#2c2c2c"/>
<circle cx="576.8" cy="984.3" r="0.8" fill="#2c2c2c"/>
<circle cx="598.0" cy="771.1" r="0.8" fill="#2c2c2c"/>
<circle cx="703.0" cy="791.7" r="0.8" fill="#2c2c2c"/>
<circle cx="613.6" cy="717.2" r="0.8" fill="#2c2c2c"/>
<circle cx="574.9" cy="865.7" r="0.8" fill="#2c2c2c"/>
<circle cx="603.6" cy="871.1" r="0.8" fill="#2c2c2c"/>
<circle cx="627.8" cy="828.0" r="0.8" fill="#2c2c2c"/>
<circle cx="738.0" cy="836.9" r="0.8" fill="#2c2c2c"/>
<circle cx="665.8" cy="948.5" r="0.8" fill="#2c2c2c"/>
<circle cx="592.3" cy="740.7" r="0.8" fill="#2c2c2c"/>
<circle cx="728.5" cy="934.3" r="0.8" fill="#2c2c2c"/>
<circle cx="604.8" cy="751.1" r="0.8" fill="#2c2c2c"/>
<circle cx="696.8" cy="970.0" r="0.8" fill="#2c2c2c"/>
<circle cx="594.9" cy="972.9" r="0.8" fill="#2c2c2c"/>
<circle cx="723.6" cy="871.8" r="0.8" fill="#2c2c2c"/>
<circle cx="637.1" cy="726.1" r="0.8" fill="#2c2c2c"/>
<circle cx="565.3" cy="976.5" r="0.8" fill="#2c2c2c"/>
<circle cx="602.7" cy="901.3" r="0.8" fill="#2c2c2c"/>
<circle cx="606.2" cy="936.0" r="0.8" fill="#2c2c2c"/>
<circle cx="670.0" cy="781.4" r="0.8" fill="#2c2c2c"/>
<circle cx="590.9" cy="905.9" r="0.8" fill="#2c2c2c"/>
<circle cx="570.9" cy="762.4" r="0.8" fill="#2c2c2c"/>
<circle cx="663.0" cy="944.4" r="0.8" fill="#2c2c2c"/>
<circle cx="673.3" cy="777.5" r="0.8" fill="#2c2c2c"/>
<circle cx="730.2" cy="755.3" r="0.8" fill="#2c2c2c"/>
<circle cx="561.1" cy="774.3" r="0.8" fill="#2c2c2c"/>
<circle cx="641.7" cy="713.4" r="0.8" fill="#2c2c2c"/>
<circle cx="591.1" cy="803.3" r="0.8" fill="#2c2c2c"/>
<circle cx="665.4" cy="734.2" r="0.8" fill="#2c2c2c"/>
<circle cx="626.0" cy="955.6" r="0.8" fill="#2c2c2c"/>
<circle cx="742.0" cy="887.4" r="0.8" fill="#2c2c2c"/>
<circle cx="687.7" cy="866.2" r="0.8" fill="#2c2c2c"/>
<circle cx="584.3" cy="706.0" r="0.8" fill="#2c2c2c"/>
<circle cx="561.4" cy="961.2" r="0.8" fill="#2c2c2c"/>
<circle cx="689.6" cy="976.5" r="0.8" fill="#2c2c2c"/>
<circle cx="562.0" cy="881.3" r="0.8" fill="#2c2c2c"/>
</g>
<clipPath id="ccl1"><path d="M805.6 695.8 C812.5 692.7 820.9 693.7 829.5 695.0 C838.1 696.3 849.0 699.6 857.0 703.6 C865.0 707.6 871.8 713.9 877.5 719.0 C883.2 724.1 886.8 727.3 891.0 734.4 C895.2 741.5 899.8 752.9 903.0 761.8 C906.2 770.6 908.0 777.5 910.0 787.5 C912.0 797.5 913.2 810.9 915.0 821.8 C916.8 832.7 919.4 845.0 921.0 853.0 C922.6 861.0 922.7 861.4 924.7 870.0 C926.8 878.6 931.9 887.4 933.3 904.7 C934.7 922.0 933.9 954.4 933.3 973.6 C932.7 992.8 934.1 1017.1 929.8 1020.0 C925.5 1022.9 918.3 998.5 907.4 990.8 C896.5 983.1 880.2 977.9 864.4 973.6 C848.6 969.3 828.2 966.1 812.7 965.0 C797.2 963.9 777.9 968.7 771.3 966.7 C764.7 964.7 767.2 956.7 773.0 953.0 C778.8 949.3 799.5 949.5 805.8 944.3 C812.1 939.1 813.0 934.4 811.0 922.0 C809.0 909.6 795.7 882.0 793.7 870.0 C791.7 858.0 797.6 856.7 799.0 850.0 C800.4 843.3 801.2 836.2 802.0 830.0 C802.8 823.8 806.8 817.8 804.0 813.0 C801.2 808.2 787.9 804.6 785.0 801.2 C782.1 797.8 785.0 796.4 786.7 792.7 C788.4 789.0 793.3 783.0 795.0 779.0 C796.7 775.0 798.4 772.7 797.0 768.7 C795.6 764.7 789.3 760.5 786.7 755.0 C784.1 749.5 781.3 742.9 781.6 736.0 C781.9 729.1 784.4 720.5 788.4 713.8 C792.4 707.1 798.8 698.9 805.6 695.8Z"/></clipPath><g clip-path="url(#ccl1)">
<circle cx="849.4" cy="932.4" r="0.8" fill="#2c2c2c"/>
<circle cx="823.0" cy="1019.8" r="0.8" fill="#2c2c2c"/>
<circle cx="783.5" cy="872.5" r="0.8" fill="#2c2c2c"/>
<circle cx="890.7" cy="987.6" r="0.8" fill="#2c2c2c"/>
<circle cx="890.7" cy="923.7" r="0.8" fill="#2c2c2c"/>
<circle cx="899.8" cy="992.4" r="0.8" fill="#2c2c2c"/>
<circle cx="828.3" cy="917.7" r="0.8" fill="#2c2c2c"/>
<circle cx="917.2" cy="978.1" r="0.8" fill="#2c2c2c"/>
<circle cx="838.9" cy="951.9" r="0.8" fill="#2c2c2c"/>
<circle cx="911.2" cy="881.2" r="0.8" fill="#2c2c2c"/>
<circle cx="872.5" cy="819.3" r="0.8" fill="#2c2c2c"/>
<circle cx="865.7" cy="892.9" r="0.8" fill="#2c2c2c"/>
<circle cx="784.3" cy="902.8" r="0.8" fill="#2c2c2c"/>
<circle cx="932.2" cy="980.9" r="0.8" fill="#2c2c2c"/>
<circle cx="889.3" cy="821.2" r="0.8" fill="#2c2c2c"/>
<circle cx="890.4" cy="883.8" r="0.8" fill="#2c2c2c"/>
<circle cx="842.7" cy="967.5" r="0.8" fill="#2c2c2c"/>
<circle cx="784.9" cy="938.8" r="0.8" fill="#2c2c2c"/>
<circle cx="776.1" cy="890.4" r="0.8" fill="#2c2c2c"/>
<circle cx="849.2" cy="769.8" r="0.8" fill="#2c2c2c"/>
<circle cx="884.4" cy="856.6" r="0.8" fill="#2c2c2c"/>
<circle cx="870.8" cy="994.2" r="0.8" fill="#2c2c2c"/>
<circle cx="812.7" cy="698.7" r="0.8" fill="#2c2c2c"/>
<circle cx="820.1" cy="915.4" r="0.8" fill="#2c2c2c"/>
<circle cx="804.1" cy="750.1" r="0.8" fill="#2c2c2c"/>
<circle cx="918.0" cy="909.5" r="0.8" fill="#2c2c2c"/>
<circle cx="842.9" cy="984.8" r="0.8" fill="#2c2c2c"/>
<circle cx="824.3" cy="911.4" r="0.8" fill="#2c2c2c"/>
<circle cx="803.5" cy="835.0" r="0.8" fill="#2c2c2c"/>
<circle cx="901.9" cy="992.1" r="0.8" fill="#2c2c2c"/>
<circle cx="913.9" cy="819.9" r="0.8" fill="#2c2c2c"/>
<circle cx="865.8" cy="797.9" r="0.8" fill="#2c2c2c"/>
<circle cx="793.4" cy="856.4" r="0.8" fill="#2c2c2c"/>
<circle cx="906.9" cy="970.8" r="0.8" fill="#2c2c2c"/>
<circle cx="886.5" cy="1003.8" r="0.8" fill="#2c2c2c"/>
<circle cx="816.1" cy="750.0" r="0.8" fill="#2c2c2c"/>
<circle cx="844.3" cy="784.4" r="0.8" fill="#2c2c2c"/>
<circle cx="806.0" cy="829.5" r="0.8" fill="#2c2c2c"/>
<circle cx="872.7" cy="855.5" r="0.8" fill="#2c2c2c"/>
<circle cx="822.4" cy="967.7" r="0.8" fill="#2c2c2c"/>
<circle cx="930.4" cy="842.1" r="0.8" fill="#2c2c2c"/>
<circle cx="783.4" cy="705.2" r="0.8" fill="#2c2c2c"/>
<circle cx="912.7" cy="708.5" r="0.8" fill="#2c2c2c"/>
<circle cx="886.1" cy="880.4" r="0.8" fill="#2c2c2c"/>
<circle cx="821.4" cy="952.2" r="0.8" fill="#2c2c2c"/>
<circle cx="774.4" cy="739.2" r="0.8" fill="#2c2c2c"/>
<circle cx="845.0" cy="703.0" r="0.8" fill="#2c2c2c"/>
<circle cx="905.7" cy="772.2" r="0.8" fill="#2c2c2c"/>
<circle cx="794.1" cy="710.3" r="0.8" fill="#2c2c2c"/>
<circle cx="873.2" cy="840.1" r="0.8" fill="#2c2c2c"/>
<circle cx="873.4" cy="907.9" r="0.8" fill="#2c2c2c"/>
<circle cx="902.1" cy="1006.5" r="0.8" fill="#2c2c2c"/>
<circle cx="882.2" cy="759.8" r="0.8" fill="#2c2c2c"/>
<circle cx="848.3" cy="753.1" r="0.8" fill="#2c2c2c"/>
<circle cx="773.0" cy="848.5" r="0.8" fill="#2c2c2c"/>
<circle cx="887.0" cy="753.2" r="0.8" fill="#2c2c2c"/>
<circle cx="815.4" cy="807.4" r="0.8" fill="#2c2c2c"/>
<circle cx="884.3" cy="864.1" r="0.8" fill="#2c2c2c"/>
<circle cx="870.8" cy="940.8" r="0.8" fill="#2c2c2c"/>
<circle cx="835.0" cy="952.4" r="0.8" fill="#2c2c2c"/>
<circle cx="918.1" cy="723.3" r="0.8" fill="#2c2c2c"/>
<circle cx="922.4" cy="929.8" r="0.8" fill="#2c2c2c"/>
<circle cx="792.3" cy="842.4" r="0.8" fill="#2c2c2c"/>
<circle cx="872.6" cy="990.7" r="0.8" fill="#2c2c2c"/>
<circle cx="832.3" cy="879.9" r="0.8" fill="#2c2c2c"/>
<circle cx="913.7" cy="953.9" r="0.8" fill="#2c2c2c"/>
<circle cx="924.3" cy="845.7" r="0.8" fill="#2c2c2c"/>
<circle cx="876.8" cy="761.6" r="0.8" fill="#2c2c2c"/>
<circle cx="888.3" cy="961.0" r="0.8" fill="#2c2c2c"/>
<circle cx="875.2" cy="928.2" r="0.8" fill="#2c2c2c"/>
<circle cx="805.9" cy="987.5" r="0.8" fill="#2c2c2c"/>
<circle cx="930.1" cy="1012.6" r="0.8" fill="#2c2c2c"/>
<circle cx="858.3" cy="952.0" r="0.8" fill="#2c2c2c"/>
<circle cx="823.2" cy="990.7" r="0.8" fill="#2c2c2c"/>
<circle cx="909.9" cy="808.3" r="0.8" fill="#2c2c2c"/>
<circle cx="784.7" cy="838.3" r="0.8" fill="#2c2c2c"/>
<circle cx="860.4" cy="944.7" r="0.8" fill="#2c2c2c"/>
<circle cx="850.3" cy="704.2" r="0.8" fill="#2c2c2c"/>
<circle cx="902.4" cy="715.8" r="0.8" fill="#2c2c2c"/>
<circle cx="900.9" cy="751.2" r="0.8" fill="#2c2c2c"/>
</g>
</g><filter id="grain3" x="0" y="0" width="100%" height="100%" filterUnits="objectBoundingBox" color-interpolation-filters="sRGB"><feTurbulence type="fractalNoise" baseFrequency="0.85 0.5" numOctaves="2" seed="3"/><feColorMatrix type="matrix" values="0.33 0.33 0.33 0 0 0.33 0.33 0.33 0 0 0.33 0.33 0.33 0 0 0 0 0 0 1"/></filter><rect x="502" y="660" width="519" height="387" filter="url(#grain3)" style="mix-blend-mode:overlay" opacity="0.65"/></svg>
<svg style="left:1148px;top:639px" width="772" height="470" viewBox="1148 639 772 470"><defs><filter id="vb" x="-10%" y="-10%" width="120%" height="120%"><feGaussianBlur stdDeviation="1.2"/></filter><filter id="vb2" x="-30%" y="-30%" width="160%" height="160%"><feGaussianBlur stdDeviation="9"/></filter><radialGradient id="vg" cx="0.47" cy="0.42" r="0.56"><stop offset="0" stop-color="#545454"/><stop offset="0.55" stop-color="#595959"/><stop offset="0.8" stop-color="#6c6c6c"/><stop offset="0.93" stop-color="#888"/><stop offset="1" stop-color="#a8a8a8"/></radialGradient><clipPath id="vclip"><path d="M1586.5 719.4 C1605.0 719.9 1625.2 725.6 1636.0 730.0 C1646.8 734.4 1650.5 739.5 1651.5 745.7 C1652.5 751.9 1644.1 750.5 1642.0 767.0 C1639.9 783.5 1639.0 816.2 1639.0 844.6 C1639.0 873.0 1642.0 914.3 1642.0 937.5 C1642.0 960.7 1643.1 971.6 1639.0 984.0 C1634.9 996.4 1631.4 1004.5 1617.5 1011.7 C1603.6 1018.9 1576.2 1025.0 1555.6 1027.0 C1535.0 1029.0 1514.3 1028.1 1493.7 1024.0 C1473.1 1019.9 1446.5 1010.1 1432.0 1002.4 C1417.5 994.7 1411.7 993.7 1407.0 977.7 C1402.3 961.7 1404.0 933.8 1404.0 906.5 C1404.0 879.2 1403.9 835.4 1407.0 813.7 C1410.1 792.1 1413.3 786.9 1422.6 776.6 C1431.9 766.3 1445.8 760.2 1462.8 751.9 C1479.8 743.6 1504.1 732.4 1524.7 727.0 C1545.3 721.6 1568.0 718.9 1586.5 719.4Z"/></clipPath></defs>
<g filter="url(#vb)">
<path d="M1387 783 L1463 714 L1463 940 L1387 984Z" fill="#777" opacity="0.55"/>
<path d="M1396 775 L1549 701 L1549 760 L1396 960Z" fill="#777" opacity="0.45"/>
<path d="M1407 765 L1574 704 L1574 745 L1407 945Z" fill="#888" opacity="0.4"/>
<path d="M1586.5 719.4 C1605.0 719.9 1625.2 725.6 1636.0 730.0 C1646.8 734.4 1650.5 739.5 1651.5 745.7 C1652.5 751.9 1644.1 750.5 1642.0 767.0 C1639.9 783.5 1639.0 816.2 1639.0 844.6 C1639.0 873.0 1642.0 914.3 1642.0 937.5 C1642.0 960.7 1643.1 971.6 1639.0 984.0 C1634.9 996.4 1631.4 1004.5 1617.5 1011.7 C1603.6 1018.9 1576.2 1025.0 1555.6 1027.0 C1535.0 1029.0 1514.3 1028.1 1493.7 1024.0 C1473.1 1019.9 1446.5 1010.1 1432.0 1002.4 C1417.5 994.7 1411.7 993.7 1407.0 977.7 C1402.3 961.7 1404.0 933.8 1404.0 906.5 C1404.0 879.2 1403.9 835.4 1407.0 813.7 C1410.1 792.1 1413.3 786.9 1422.6 776.6 C1431.9 766.3 1445.8 760.2 1462.8 751.9 C1479.8 743.6 1504.1 732.4 1524.7 727.0 C1545.3 721.6 1568.0 718.9 1586.5 719.4Z" fill="url(#vg)"/>
</g>
<g clip-path="url(#vclip)"><g filter="url(#vb2)">
<ellipse cx="1462" cy="860" rx="45" ry="85" fill="#525252"/>
<ellipse cx="1575" cy="790" rx="55" ry="45" fill="#565656"/>
<ellipse cx="1590" cy="890" rx="35" ry="70" fill="#5a5a5a"/>
<ellipse cx="1540" cy="1005" rx="110" ry="30" fill="#8c8c8c"/>
<ellipse cx="1420" cy="960" rx="25" ry="50" fill="#7c7c7c"/>
</g>
<g fill="none" stroke="#747474" stroke-width="4" opacity="0.45" filter="url(#vb)">
<path d="M1436 775 C1460 830 1500 865 1535 880"/>
<path d="M1436 801 C1460 856 1500 891 1535 906"/>
<path d="M1436 827 C1460 882 1500 917 1535 932"/>
<path d="M1436 853 C1460 908 1500 943 1535 958"/>
<path d="M1436 879 C1460 934 1500 969 1535 984"/>
<path d="M1436 905 C1460 960 1500 995 1535 1010"/>
</g>
<g fill="none" stroke="#4a4a4a" stroke-width="3" opacity="0.5" filter="url(#vb)">
<path d="M1575 835 l45 18"/>
<path d="M1575 848 l43 19"/>
<path d="M1575 861 l41 20"/>
<path d="M1575 874 l39 21"/>
<path d="M1575 887 l37 22"/>
<path d="M1575 900 l35 23"/>
<path d="M1575 913 l33 24"/>
<path d="M1575 926 l31 25"/>
<path d="M1575 939 l29 26"/>
</g>
<path d="M1560 860 C1568 900 1575 930 1580 940" stroke="#505050" stroke-width="14" fill="none" opacity="0.6" filter="url(#vb)"/>
</g>
<path d="M1492 770 C1510 760 1530 768 1540 785 C1525 790 1500 800 1490 820 C1480 815 1482 790 1492 770Z" fill="#5c5c5c" opacity="0.8"/>
<ellipse cx="1482" cy="824" rx="3" ry="2.5" fill="#eee"/>
<path d="M1566 810 L1576 780 L1572 777 L1562 806Z" fill="#8a8a8a" stroke="#a0a0a0"/>
<path d="M1572 822 C1582 820 1588 814 1590 806" stroke="#b0b0b0" stroke-width="3" fill="none"/>
<path d="M1512 812 C1520 806 1528 808 1536 815" stroke="#8a8a8a" stroke-width="3" fill="none"/><filter id="grain4" x="0" y="0" width="100%" height="100%" filterUnits="objectBoundingBox" color-interpolation-filters="sRGB"><feTurbulence type="fractalNoise" baseFrequency="0.85 0.5" numOctaves="2" seed="4"/><feColorMatrix type="matrix" values="0.33 0.33 0.33 0 0 0.33 0.33 0.33 0 0 0.33 0.33 0.33 0 0 0 0 0 0 1"/></filter><rect x="1380" y="695" width="290" height="345" filter="url(#grain4)" style="mix-blend-mode:overlay" opacity="0.3"/></svg>
<div class="a" style="left:568px;top:167px;width:387px;height:387px;background:transparent;border:1px solid #7c7c7c;"></div>
<div class="a" style="left:1275px;top:167px;width:518px;height:387px;background:transparent;border:1px solid #7c7c7c;"></div>
<div class="a" style="left:501px;top:659px;width:521px;height:389px;background:transparent;border:1px solid #7c7c7c;"></div>
<svg style="left:1715px;top:149px;" width="16" height="16" viewBox="0 0 16 16"><path d="M4.5 9.5V4.2a1 1 0 0 1 2 0V8M6.5 8V2.2a1 1 0 0 1 2 0V8M8.5 8V2.8a1 1 0 0 1 2 0V8M10.5 8.2V4.3a1 1 0 0 1 2 0V10.5c0 3-1.6 5-4 5H7.2c-1.3 0-2-.6-2.7-1.6L1.3 9.6a1.1 1.1 0 0 1 1.8-1.2l1.4 1.6" fill="none" stroke="#ffffff" stroke-width="1.1" stroke-linejoin="round"/></svg>
<svg style="left:1735px;top:149px;" width="16" height="16" viewBox="0 0 16 16"><circle cx="6.5" cy="6.5" r="5.3" fill="none" stroke="#ffffff" stroke-width="1.1"/><path d="M10.3 10.3L15 15" stroke="#ffffff" stroke-width="1.6"/><path d="M6.5 3.8v5.4M3.8 6.5h5.4" stroke="#ffffff" stroke-width="1.1"/></svg>
<svg style="left:1755px;top:149px;" width="16" height="16" viewBox="0 0 16 16"><circle cx="6.5" cy="6.5" r="5.3" fill="none" stroke="#ffffff" stroke-width="1.1"/><path d="M10.3 10.3L15 15" stroke="#ffffff" stroke-width="1.6"/><path d="M3.8 6.5h5.4" stroke="#ffffff" stroke-width="1.1"/></svg>
<svg style="left:1775px;top:149px;" width="16" height="16" viewBox="0 0 16 16"><path d="M0.8 8.2L8 1.2l7.2 7" fill="none" stroke="#ffffff" stroke-width="1.1"/><path d="M2.8 6.8V15.5H6.5V10.8H9.5V15.5H13.2V6.8" fill="none" stroke="#ffffff" stroke-width="1.1"/><path d="M11.5 1.5h2.5v2.5z" fill="#ffffff"/></svg>
<svg style="left:1817px;top:652px" width="20" height="20" viewBox="0 0 16 16"><path d="M9 1.2A7.3 7.3 0 1 0 14.2 5" fill="none" stroke="#6a6a6a" stroke-width="1.1"/><path d="M11.5 0.8l3.2 0.2-0.6 3.3z" fill="#6a6a6a"/><path d="M8 5.2l3 1.5v3.6l-3 1.5-3-1.5V6.7z M5 6.7l3 1.5 3-1.5M8 8.2v3.6" fill="none" stroke="#6a6a6a" stroke-width="1"/></svg>
<svg style="left:1841px;top:652px" width="20" height="20" viewBox="0 0 16 16"><path d="M4.5 9.5V4.2a1 1 0 0 1 2 0V8M6.5 8V2.2a1 1 0 0 1 2 0V8M8.5 8V2.8a1 1 0 0 1 2 0V8M10.5 8.2V4.3a1 1 0 0 1 2 0V10.5c0 3-1.6 5-4 5H7.2c-1.3 0-2-.6-2.7-1.6L1.3 9.6a1.1 1.1 0 0 1 1.8-1.2l1.4 1.6" fill="none" stroke="#6a6a6a" stroke-width="1.1" stroke-linejoin="round"/></svg>
<svg style="left:1865px;top:652px" width="20" height="20" viewBox="0 0 16 16"><circle cx="6.5" cy="6.5" r="5.3" fill="none" stroke="#6a6a6a" stroke-width="1.1"/><path d="M10.3 10.3L15 15" stroke="#6a6a6a" stroke-width="1.8"/></svg>
<svg style="left:1889px;top:652px" width="20" height="20" viewBox="0 0 16 16"><path d="M0.8 8.2L8 1.2l7.2 7" fill="none" stroke="#6a6a6a" stroke-width="1.1"/><path d="M2.8 6.8V15.5H6.5V10.8H9.5V15.5H13.2V6.8" fill="none" stroke="#6a6a6a" stroke-width="1.1"/><path d="M11.5 1.5h2.5v2.5z" fill="#6a6a6a"/></svg>
<div class="a" style="left:760px;top:616px;width:2px;height:1px;background:#222;"></div>
<div class="a" style="left:1533px;top:616px;width:2px;height:1px;background:#222;"></div>
<div class="a" style="left:758px;top:593px;width:2px;height:2px;background:#3aa0f0;"></div>
<div class="t" style="top:558.76px;font-size:18px;color:#ffffff;left:735.5px;width:400px;text-align:right;">132/264</div>
<div class="t" style="top:558.76px;font-size:18px;color:#ffffff;left:1508.9px;width:400px;text-align:right;">256/512</div>
<div class="t" style="top:1052.76px;font-size:18px;color:#ffffff;left:735.5px;width:400px;text-align:right;">256/512</div>
<div class="a" style="left:0px;top:1109px;width:1920px;height:1px;background:#a9a9a9;"></div>
<div class="a" style="left:0px;top:1110px;width:1920px;height:22px;background:#e6e6e6;"></div>
<div class="a" style="left:375px;top:1109px;width:1px;height:23px;background:#bdbdbd;"></div>
<svg style="left:6px;top:1114px;" width="10" height="14" viewBox="0 0 10 14"><rect x="0" y="0" width="2" height="14" fill="#8a8a8a"/><path d="M10 0v14L3 7z" fill="#8a8a8a"/></svg>
<svg style="left:1780px;top:1113px;" width="16" height="16" viewBox="0 0 16 16"><path d="M8 1l7 3.5-7 3.5-7-3.5z" fill="#ffe68a" stroke="#6b5a00" stroke-width="0.8"/><path d="M1 4.5l7 3.5v7.5l-7-3.5z" fill="#bfe0ff" stroke="#2b6fd4" stroke-width="1"/><path d="M8 8l7-3.5v7.5l-7 3.5z" fill="#c0f0b8" stroke="#1fa02a" stroke-width="1"/></svg>
<div class="t" style="top:1114.44px;font-size:12px;color:#222;left:1516.7px;width:400px;text-align:right;">Volume Session (3-D)</div>
</body></html>
